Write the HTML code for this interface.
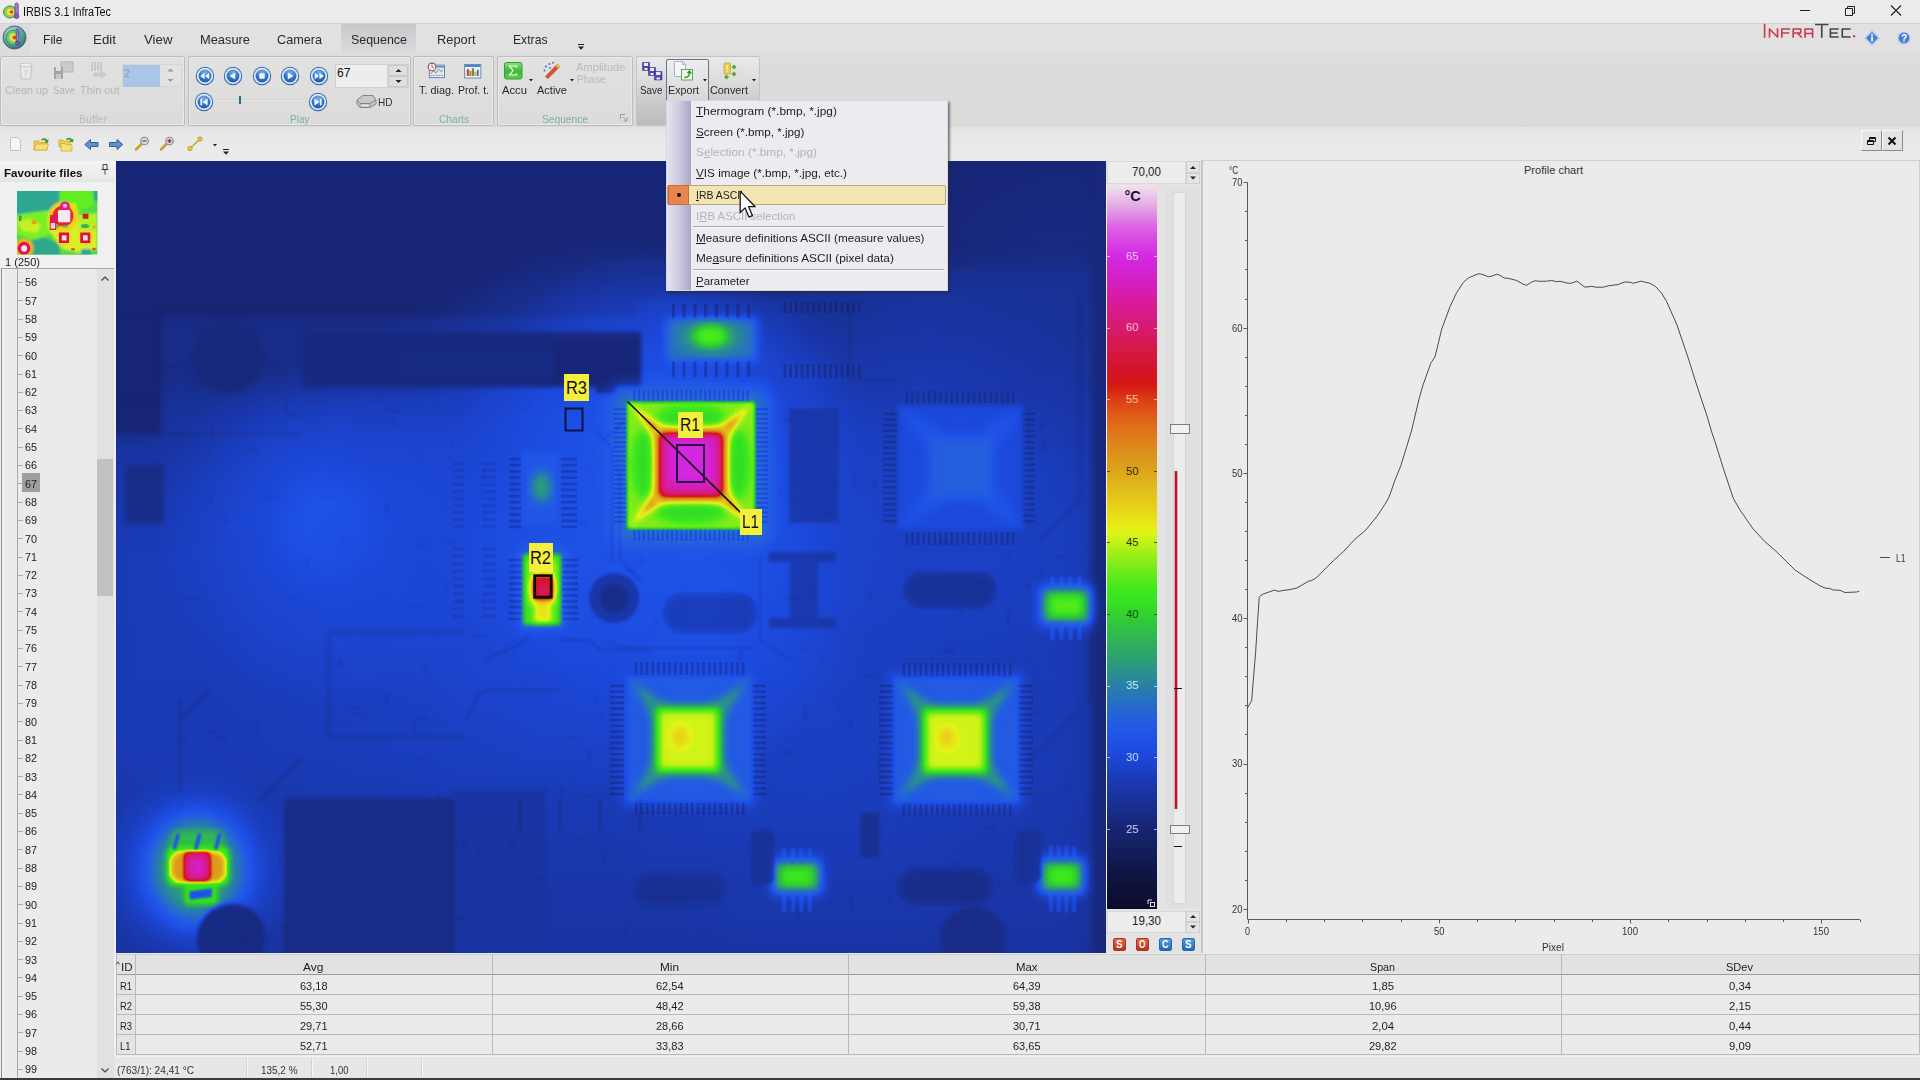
<!DOCTYPE html>
<html><head><meta charset="utf-8"><title>IRBIS 3.1 InfraTec</title>
<style>
html,body{margin:0;padding:0;}
body{width:1920px;height:1080px;overflow:hidden;background:#e6e6e6;font-family:"Liberation Sans", sans-serif;position:relative;}
.t{position:absolute;white-space:nowrap;}
.b{position:absolute;box-sizing:border-box;}
svg{position:absolute;overflow:visible;}
</style></head><body>
<div class="b" style="left:0px;top:0px;width:1920px;height:23px;background:#ececec;"></div>
<svg style="left:3px;top:2px" width="18" height="18" viewBox="0 0 18 18">
<ellipse cx="7" cy="10" rx="6.5" ry="6" fill="#8fd05a"/><ellipse cx="7" cy="10" rx="6.5" ry="6" fill="none" stroke="#3f8d4a" stroke-width="1"/>
<ellipse cx="7.5" cy="10" rx="3.6" ry="3.2" fill="#f2e23a"/><circle cx="8.5" cy="10" r="1.8" fill="#e2452a"/>
<rect x="12" y="1" width="3.2" height="12" rx="1.6" fill="#a07ad0" stroke="#5a3c8a" stroke-width=".8"/><circle cx="13.6" cy="14.2" r="2.4" fill="#8a5cc0" stroke="#5a3c8a" stroke-width=".8"/>
</svg>
<div class="t" style="left:23px;top:4.9px;font-size:12px;line-height:14.4px;color:#111;transform:scaleX(0.904);transform-origin:0 50%;">IRBIS 3.1 InfraTec</div>
<svg style="left:1790px;top:0" width="130" height="23" viewBox="0 0 130 23">
<path d="M10 10.5H20" stroke="#222" stroke-width="1" fill="none"/>
<path d="M55.5 8.5h7v7h-7zM57.5 8.5v-2h7v7h-2" stroke="#222" stroke-width="1" fill="none"/>
<path d="M101 5.5l10 10M111 5.5l-10 10" stroke="#222" stroke-width="1.1" fill="none"/>
</svg>
<div class="b" style="left:0px;top:23px;width:1920px;height:30px;background:#e1e1e1;border-top:1px solid #d4d4d4;"></div>
<div class="b" style="left:0px;top:24px;width:30px;height:29px;background:#dcdcdc;"></div>
<svg style="left:2px;top:25px" width="25" height="25" viewBox="0 0 25 25">
<defs><radialGradient id="lg1" cx=".4" cy=".35" r=".7"><stop offset="0" stop-color="#e8f6f2"/><stop offset=".6" stop-color="#5ea7a0"/><stop offset="1" stop-color="#2d5f78"/></radialGradient></defs>
<circle cx="12.5" cy="12.5" r="11.5" fill="url(#lg1)" stroke="#4a6c88" stroke-width="1"/>
<circle cx="11.5" cy="12.5" r="7.5" fill="#6fc86a"/><circle cx="11.5" cy="12.5" r="7.5" fill="none" stroke="#2f8f6f" stroke-width="1"/>
<circle cx="11.5" cy="12.5" r="4.2" fill="#e8e24a"/><circle cx="12.5" cy="12.5" r="2.1" fill="#e2452a"/>
<rect x="14.2" y="4" width="2.6" height="13" rx="1.3" fill="#9a7ad0" stroke="#4a3c8a" stroke-width=".7"/><circle cx="15.5" cy="18" r="2" fill="#7a5cc0" stroke="#4a3c8a" stroke-width=".7"/>
</svg>
<div class="b" style="left:341px;top:24px;width:75px;height:29px;background:linear-gradient(#c9c9cd,#d2d2d5 55%,#dcdcdd);"></div>
<div class="t" style="left:43px;top:32.4px;font-size:12.8px;line-height:15.4px;color:#2a2a2a;transform:scaleX(0.946);transform-origin:0 50%;">File</div>
<div class="t" style="left:93px;top:32.4px;font-size:12.8px;line-height:15.4px;color:#2a2a2a;transform:scaleX(1.043);transform-origin:0 50%;">Edit</div>
<div class="t" style="left:144px;top:32.4px;font-size:12.8px;line-height:15.4px;color:#2a2a2a;transform:scaleX(1.036);transform-origin:0 50%;">View</div>
<div class="t" style="left:200px;top:32.4px;font-size:12.8px;line-height:15.4px;color:#2a2a2a;transform:scaleX(1.004);transform-origin:0 50%;">Measure</div>
<div class="t" style="left:277px;top:32.4px;font-size:12.8px;line-height:15.4px;color:#2a2a2a;transform:scaleX(0.989);transform-origin:0 50%;">Camera</div>
<div class="t" style="left:350.5px;top:32.4px;font-size:12.8px;line-height:15.4px;color:#2a2a2a;transform:scaleX(0.971);transform-origin:0 50%;">Sequence</div>
<div class="t" style="left:437px;top:32.4px;font-size:12.8px;line-height:15.4px;color:#2a2a2a;transform:scaleX(1.002);transform-origin:0 50%;">Report</div>
<div class="t" style="left:512.5px;top:32.4px;font-size:12.8px;line-height:15.4px;color:#2a2a2a;transform:scaleX(0.951);transform-origin:0 50%;">Extras</div>
<svg style="left:577px;top:43px" width="8" height="8" viewBox="0 0 8 8"><path d="M1 1.5h6" stroke="#222" stroke-width="1"/><path d="M1 3.5h6l-3 3.2z" fill="#222"/></svg>
<svg style="left:1763px;top:23px" width="103.500" height="17" viewBox="0 0 96 17" preserveAspectRatio="none">
<g fill="none" stroke="#c83a52" stroke-width="1.5" stroke-linejoin="round" stroke-linecap="square">
<path d="M1.5 1.5V14"/><path d="M6 14V6L13.5 14V6"/><path d="M17.5 14V6H24.5M17.5 10H23.5"/><path d="M28 14V6H35V10H28M32 10L35.5 14"/><path d="M39 14V6H46V14M39 10.5H46"/>
</g>
<g fill="none" stroke="#444" stroke-width="1.5" stroke-linejoin="round" stroke-linecap="square">
<path d="M49 1.5H60M54.5 1.5V14"/><path d="M69.500 6H62.500V14H69.500M62.500 10H68.500"/><path d="M80.500 6H73.500V14H80.500"/>
</g><rect x="83.500" y="12.200" width="2" height="2" fill="#c83a52"/>
</svg>
<svg style="left:1864px;top:30px" width="16" height="16" viewBox="0 0 16 16"><path d="M8 1L15 8L8 15L1 8z" fill="#4a7fd6" stroke="#b7cdf0" stroke-width="1.4"/><rect x="7.200" y="6.500" width="1.700" height="5" fill="#fff"/><circle cx="8" cy="4.800" r="1" fill="#fff"/></svg>
<svg style="left:1897px;top:31px" width="14" height="14" viewBox="0 0 14 14"><circle cx="7" cy="7" r="6" fill="#4a7fd6" stroke="#b7cdf0" stroke-width="1.200"/><text x="7" y="10.600" font-size="10" font-weight="bold" text-anchor="middle" fill="#fff" font-family='"Liberation Sans",sans-serif'>?</text></svg>
<div class="b" style="left:0px;top:53px;width:1920px;height:74px;background:linear-gradient(#dddddc,#dddcda 30%,#dbdad8);"></div>
<div class="b" style="left:0px;top:56px;width:185px;height:70px;border:1px solid #bdbdbd;border-radius:2px;background:linear-gradient(#e1e1e0,#dcdbda);box-shadow:inset 0 0 0 1px #e9e9e8;"></div>
<div class="b" style="left:188px;top:56px;width:223px;height:70px;border:1px solid #bdbdbd;border-radius:2px;background:linear-gradient(#e1e1e0,#dcdbda);box-shadow:inset 0 0 0 1px #e9e9e8;"></div>
<div class="b" style="left:413px;top:56px;width:81px;height:70px;border:1px solid #bdbdbd;border-radius:2px;background:linear-gradient(#e1e1e0,#dcdbda);box-shadow:inset 0 0 0 1px #e9e9e8;"></div>
<div class="b" style="left:497px;top:56px;width:136px;height:70px;border:1px solid #bdbdbd;border-radius:2px;background:linear-gradient(#e1e1e0,#dcdbda);box-shadow:inset 0 0 0 1px #e9e9e8;"></div>
<div class="b" style="left:636px;top:56px;width:124px;height:70px;border:1px solid #c4c4c4;border-radius:2px;background:linear-gradient(#e9e9e9,#dcdcdc 35%,#c3c3c4 80%,#bdbdbe);"></div>
<div class="t" style="left:78.5px;top:113.1px;font-size:10.8px;line-height:13.0px;color:#b9bcbb;transform:scaleX(0.978);transform-origin:0 50%;">Buffer</div>
<div class="t" style="left:290.25px;top:113.1px;font-size:10.8px;line-height:13.0px;color:#79b3a6;transform:scaleX(0.928);transform-origin:0 50%;">Play</div>
<div class="t" style="left:439.0px;top:113.1px;font-size:10.8px;line-height:13.0px;color:#79b3a6;transform:scaleX(0.943);transform-origin:0 50%;">Charts</div>
<div class="t" style="left:542.0px;top:113.1px;font-size:10.8px;line-height:13.0px;color:#79b3a6;transform:scaleX(0.946);transform-origin:0 50%;">Sequence</div>
<svg style="left:620px;top:114px" width="8" height="8" viewBox="0 0 8 8"><path d="M.5 5V.5H5" stroke="#9a9a9a" fill="none"/><path d="M3 3L7 7M7 3.500V7H3.500" stroke="#9a9a9a" fill="none"/></svg>
<svg style="left:16px;top:61px" width="20" height="20" viewBox="0 0 20 20" opacity=".55"><path d="M4 4h12l-1.500 14h-9z" fill="#f4f4f4" stroke="#aaa"/><ellipse cx="10" cy="4" rx="6" ry="2" fill="#fafafa" stroke="#aaa"/><path d="M8 9l2 2 2-2M10 11v4" stroke="#bbb" fill="none"/></svg>
<svg style="left:53px;top:61px" width="22" height="20" viewBox="0 0 22 20" opacity=".7"><rect x="8" y="1" width="12" height="10" fill="#c4c4c4" stroke="#a0a0a0"/><path d="M1 6h9v12H1z" fill="#8a8a8a"/><rect x="3" y="6" width="5" height="4" fill="#dcdcdc"/><rect x="3" y="13" width="5" height="5" fill="#bdbdbd"/></svg>
<svg style="left:89px;top:60px" width="20" height="20" viewBox="0 0 20 20" opacity=".6"><path d="M3 2v9M6 2v9M9 2v9M12 2v9" stroke="#aaa" stroke-width="1.5"/><path d="M5 13h7v-2l5 3.500-5 3.500v-2H5z" fill="#c2c2c2" stroke="#aaa" stroke-width=".7"/></svg>
<div class="t" style="left:5px;top:84.1px;font-size:10.8px;line-height:13.0px;color:#b6b6b6;transform:scaleX(0.995);transform-origin:0 50%;">Clean up</div>
<div class="t" style="left:52.5px;top:84.1px;font-size:10.8px;line-height:13.0px;color:#b6b6b6;transform:scaleX(0.894);transform-origin:0 50%;">Save</div>
<div class="t" style="left:80px;top:84.1px;font-size:10.8px;line-height:13.0px;color:#b6b6b6;transform:scaleX(1.012);transform-origin:0 50%;">Thin out</div>
<div class="b" style="left:122px;top:64px;width:60px;height:23px;background:#e2e2e2;border:1px solid #d6d6d6;"></div>
<div class="b" style="left:122.5px;top:65px;width:37.5px;height:22px;background:#a9c6e8;"></div>
<div class="t" style="left:124px;top:67.1px;font-size:10.8px;line-height:13.0px;color:#8aa0bc;">2</div>
<svg style="left:166px;top:67px" width="9" height="17" viewBox="0 0 9 17"><path d="M1.500 4.500L4.500 1.500L7.500 4.500z" fill="#9a9a9a"/><path d="M1.500 12L4.500 15L7.500 12z" fill="#9a9a9a"/></svg>
<svg width="0" height="0" style="left:0;top:0"><defs><radialGradient id="pb" cx=".5" cy=".25" r=".9"><stop offset="0" stop-color="#7fb2e6"/><stop offset=".55" stop-color="#2f70c2"/><stop offset="1" stop-color="#1d4f96"/></radialGradient></defs></svg>
<svg style="left:195px;top:65.5px" width="20" height="20" viewBox="-10 -10 20 20"><circle r="9.2" fill="#2d66b5"/><circle r="8.200" fill="#dbe9f8"/><circle r="6.400" fill="url(#pb)"/><path d="M-0.500 -3.200V3.200L-4.800 0zM4.300 -3.200V3.200L0 0z" fill="#eef5fc"/></svg>
<svg style="left:223px;top:65.5px" width="20" height="20" viewBox="-10 -10 20 20"><circle r="9.2" fill="#2d66b5"/><circle r="8.200" fill="#dbe9f8"/><circle r="6.400" fill="url(#pb)"/><path d="M2.200 -3.600V3.600L-3.400 0z" fill="#eef5fc"/></svg>
<svg style="left:252px;top:65.5px" width="20" height="20" viewBox="-10 -10 20 20"><circle r="9.2" fill="#2d66b5"/><circle r="8.200" fill="#dbe9f8"/><circle r="6.400" fill="url(#pb)"/><rect x="-2.700" y="-2.700" width="5.400" height="5.400" rx=".8" fill="#eef5fc"/></svg>
<svg style="left:280px;top:65.5px" width="20" height="20" viewBox="-10 -10 20 20"><circle r="9.2" fill="#2d66b5"/><circle r="8.200" fill="#dbe9f8"/><circle r="6.400" fill="url(#pb)"/><path d="M-2.200 -3.600V3.600L3.400 0z" fill="#eef5fc"/></svg>
<svg style="left:309px;top:65.5px" width="20" height="20" viewBox="-10 -10 20 20"><circle r="9.2" fill="#2d66b5"/><circle r="8.200" fill="#dbe9f8"/><circle r="6.400" fill="url(#pb)"/><path d="M0.500 -3.200V3.200L4.800 0zM-4.300 -3.200V3.200L0 0z" fill="#eef5fc"/></svg>
<svg style="left:194px;top:92px" width="20" height="20" viewBox="-10 -10 20 20"><circle r="9.2" fill="#2d66b5"/><circle r="8.200" fill="#dbe9f8"/><circle r="6.400" fill="url(#pb)"/><path d="M3.600 -3.400V3.400L-1.500 0z" fill="#eef5fc"/><rect x="-3.600" y="-3.400" width="1.700" height="6.800" fill="#eef5fc"/></svg>
<svg style="left:307.5px;top:92px" width="20" height="20" viewBox="-10 -10 20 20"><circle r="9.2" fill="#2d66b5"/><circle r="8.200" fill="#dbe9f8"/><circle r="6.400" fill="url(#pb)"/><path d="M-3.600 -3.400V3.400L1.500 0z" fill="#eef5fc"/><rect x="1.900" y="-3.400" width="1.700" height="6.800" fill="#eef5fc"/></svg>
<div class="b" style="left:219px;top:99px;width:84px;height:2px;background:#d2d2d2;border-bottom:1px solid #e8e8e8;"></div>
<div class="b" style="left:239px;top:96px;width:2px;height:8px;background:#2a6a9a;"></div>
<div class="b" style="left:335px;top:64px;width:74px;height:24px;background:#d9d9d9;border:1px solid #d0d0d0;"></div>
<div class="b" style="left:336px;top:65px;width:51px;height:22px;background:#ededed;"></div>
<div class="t" style="left:337px;top:65.9px;font-size:12px;line-height:14.4px;color:#111;">67</div>
<div class="b" style="left:388px;top:65px;width:20px;height:11px;background:#dedede;border:1px solid #c9c9c9;"></div>
<div class="b" style="left:388px;top:76px;width:20px;height:11px;background:#dedede;border:1px solid #c9c9c9;"></div>
<svg style="left:394px;top:66px" width="9" height="20" viewBox="0 0 9 20"><path d="M1.500 6L4.500 3L7.500 6z" fill="#222"/><path d="M1.500 14L4.500 17L7.500 14z" fill="#222"/></svg>
<svg style="left:356px;top:94px" width="21" height="15" viewBox="0 0 21 15"><path d="M1 6L7 1.500H17L20 6V10L14 13.500H4L1 10z" fill="#c9c9c9" stroke="#7a7a7a" stroke-width=".9"/><path d="M1 6L4 9.500H14L20 6" fill="none" stroke="#7a7a7a" stroke-width=".9"/><path d="M4 9.500V13.500M14 9.500V13.500" stroke="#8a8a8a" stroke-width=".7"/><path d="M6 11.500h6" stroke="#eee"/></svg>
<div class="t" style="left:378px;top:96.1px;font-size:10.8px;line-height:13.0px;color:#333;transform:scaleX(0.93);transform-origin:0 50%;">HD</div>
<svg style="left:427px;top:62px" width="19" height="17" viewBox="0 0 21 19"><rect x="2.500" y="3.500" width="17" height="14" fill="#dfeaf6" stroke="#5a7fae"/><rect x="3" y="4" width="16" height="2.500" fill="#7a9cc8"/><path d="M4 13l3-3 3 2 3-4 3 3 2-2" stroke="#4b9a5a" fill="none"/><path d="M4 15h14" stroke="#888" stroke-dasharray="2 1"/><circle cx="5.500" cy="5.500" r="4.300" fill="#f6eef0" stroke="#b8455a" stroke-width="1.300"/><path d="M5.500 5.500V3M5.500 5.500L7.500 6.500" stroke="#7a2a3a" stroke-width=".8"/></svg>
<svg style="left:464px;top:63.500px" width="17.500" height="14.500" viewBox="0 0 20 17"><rect x=".5" y=".5" width="19" height="16" fill="#e9f0f8" stroke="#5a7fae"/><rect x="1" y="1" width="18" height="2.500" fill="#4f86c6"/><rect x="3" y="6" width="2.500" height="8" fill="#c8492f"/><rect x="6" y="8" width="2.500" height="6" fill="#d9792f"/><rect x="9" y="5" width="2.500" height="9" fill="#4a9a4a"/><rect x="12" y="9" width="2.500" height="5" fill="#d9b02f"/><rect x="15" y="7" width="2" height="7" fill="#3b70b8"/></svg>
<div class="t" style="left:418.5px;top:84.1px;font-size:10.8px;line-height:13.0px;color:#2a2a2a;transform:scaleX(1.005);transform-origin:0 50%;">T. diag.</div>
<div class="t" style="left:457.5px;top:84.1px;font-size:10.8px;line-height:13.0px;color:#2a2a2a;transform:scaleX(0.975);transform-origin:0 50%;">Prof. t.</div>
<svg style="left:504px;top:62px" width="19" height="18" viewBox="0 0 19 18"><defs><linearGradient id="ga" x1="0" y1="0" x2="0" y2="1"><stop offset="0" stop-color="#8fe07a"/><stop offset=".5" stop-color="#3fb93a"/><stop offset="1" stop-color="#56cf4a"/></linearGradient></defs><rect x=".5" y=".5" width="17.500" height="16.500" rx="2" fill="url(#ga)" stroke="#3a9a36"/><path d="M12.500 5.500V4H5.500L9 8.500L5.500 13H12.500V11.500" fill="none" stroke="#f4fff0" stroke-width="1.200"/></svg>
<svg style="left:542px;top:61px" width="20" height="20" viewBox="0 0 20 20"><path d="M3.500 17.500L14 6.500L16.500 9L6 19.500z" fill="#e0502f" stroke="#a8341f" stroke-width=".6" transform="translate(0,-2)"/><path d="M13.500 5L15.500 3L18 5.500L16 7.500z" fill="#f0c040" stroke="#a8801f" stroke-width=".5"/><g fill="#3b7fd0"><circle cx="4" cy="5.500" r="1.100"/><circle cx="7.500" cy="3" r="1.100"/><circle cx="11" cy="1.800" r="1"/><circle cx="2.500" cy="9.500" r="1"/><circle cx="8" cy="7" r=".9"/></g></svg>
<div class="t" style="left:501.5px;top:84.1px;font-size:10.8px;line-height:13.0px;color:#2a2a2a;transform:scaleX(1.041);transform-origin:0 50%;">Accu</div>
<div class="t" style="left:536.5px;top:84.1px;font-size:10.8px;line-height:13.0px;color:#2a2a2a;transform:scaleX(1.02);transform-origin:0 50%;">Active</div>
<div class="t" style="left:576px;top:60.6px;font-size:10.8px;line-height:13.0px;color:#b9b9b9;transform:scaleX(1.031);transform-origin:0 50%;">Amplitude</div>
<div class="t" style="left:576.5px;top:73.1px;font-size:10.8px;line-height:13.0px;color:#b9b9b9;transform:scaleX(0.931);transform-origin:0 50%;">Phase</div>
<svg style="left:529px;top:79px" width="4" height="2.500" viewBox="0 0 4 2.500"><path d="M0 0H4L2 2.500z" fill="#222"/></svg>
<svg style="left:569.5px;top:79px" width="4" height="2.500" viewBox="0 0 4 2.500"><path d="M0 0H4L2 2.500z" fill="#222"/></svg>
<svg style="left:642px;top:62px" width="21" height="19" viewBox="0 0 21 19"><g fill="#4a4ab0" stroke="#2a2a7a" stroke-width=".5"><path d="M.5 .5h7v8h-7z"/><path d="M6.500 5.500h7v8h-7z"/><path d="M12.500 9.500h7.500v8.500h-7.500z"/></g><g fill="#e9e9f6"><rect x="2" y="1" width="4" height="3"/><rect x="8" y="6" width="4" height="3"/><rect x="14" y="10" width="4.500" height="3"/><rect x="2.500" y="6" width="3" height="2"/><rect x="8.500" y="11" width="3" height="2"/><rect x="14.500" y="15.500" width="3.500" height="2"/></g></svg>
<div class="b" style="left:665.5px;top:59px;width:43px;height:44px;border:1px solid #6f7186;border-radius:2px;background:linear-gradient(#ededee,#e3e3e6 50%,#d6d6da);"></div>
<svg style="left:674px;top:61px" width="20" height="21" viewBox="0 0 20 21"><path d="M.5 .5h8l3 3v12H.5z" fill="#f4f6fa" stroke="#9aa6bb" stroke-width=".8"/><path d="M8.500 .5v3h3" fill="none" stroke="#9aa6bb" stroke-width=".8"/><rect x="7.500" y="8.500" width="11" height="10.500" fill="#eef6ea" stroke="#5a9a4a" stroke-width=".9"/><path d="M10.500 16.500c3 0 5-2 5-5m-2 .8l2-2.300 1.800 2.500" fill="none" stroke="#2f8a2a" stroke-width="1.300"/></svg>
<svg style="left:722px;top:62px" width="17" height="19" viewBox="0 0 17 19"><rect x="2" y="1" width="6.500" height="11" rx="1" fill="#e9cf4a" stroke="#b59a2a" stroke-width=".6"/><path d="M5.200 3v4.500M5.200 9v1.200" stroke="#fff7c0" stroke-width="1.200"/><g fill="#5aa832"><path d="M9.500 5l2.500-2.500L14.500 5 12 7.500z"/><path d="M9.500 12l2.500-2.500 2.500 2.500-2.500 2.500z"/><path d="M2 15l2.500-2.500L7 15l-2.500 2.500z"/></g></svg>
<div class="t" style="left:640.25px;top:84.1px;font-size:10.8px;line-height:13.0px;color:#2a2a2a;transform:scaleX(0.914);transform-origin:0 50%;">Save</div>
<div class="t" style="left:668.0px;top:84.1px;font-size:10.8px;line-height:13.0px;color:#2a2a2a;transform:scaleX(0.993);transform-origin:0 50%;">Export</div>
<div class="t" style="left:710.0px;top:84.1px;font-size:10.8px;line-height:13.0px;color:#2a2a2a;transform:scaleX(1.005);transform-origin:0 50%;">Convert</div>
<svg style="left:702.5px;top:79px" width="4" height="2.500" viewBox="0 0 4 2.500"><path d="M0 0H4L2 2.500z" fill="#222"/></svg>
<svg style="left:751.5px;top:79px" width="4" height="2.500" viewBox="0 0 4 2.500"><path d="M0 0H4L2 2.500z" fill="#222"/></svg>
<div class="b" style="left:0px;top:127px;width:1920px;height:34px;background:linear-gradient(#e3e3e3,#e9e9e9 40%,#ececec);"></div>
<svg style="left:8px;top:136px" width="230" height="22" viewBox="0 0 230 22">
<path d="M2.500 1.500h7l3 3v10h-10z" fill="#f3f5fb" stroke="#b7bdd0" stroke-width=".9"/>
<g transform="translate(25,0)"><path d="M1 5h5l1.500 1.500H14V14H1z" fill="#f0cf4a" stroke="#c9a52a" stroke-width=".7"/><path d="M3 8h12.500L13.500 14H1z" fill="#f7e07a" stroke="#c9a52a" stroke-width=".7"/><path d="M8 3.500c2.500-2 5-1.500 6 .5l1.500-1-.5 4-3.800-1 1.400-.9c-.8-1.200-2.400-1.300-3.800-.4z" fill="#3f9a2f"/></g>
<g transform="translate(50,0)"><path d="M1 4h4l1.200 1.200H12V11H1z" fill="#f0cf4a" stroke="#c9a52a" stroke-width=".7"/><path d="M3 7.500h4l1.200 1.200H14V15H3z" fill="#f7e07a" stroke="#c9a52a" stroke-width=".7"/><path d="M8 3c2.500-2 5-1.500 6 .5l1.500-1-.5 4-3.800-1 1.400-.9c-.8-1.200-2.400-1.300-3.800-.4z" fill="#3f9a2f"/></g>
<g transform="translate(76,2)"><path d="M.8 6.500L6.500 1.500V4.500H14V8.500H6.500V11.500z" fill="#5b92cf" stroke="#2f5f96" stroke-width="1"/></g>
<g transform="translate(100.500,2)"><path d="M14.200 6.500L8.500 1.500V4.500H1V8.500H8.500V11.500z" fill="#5b92cf" stroke="#2f5f96" stroke-width="1"/></g>
<g transform="translate(126,0)"><path d="M2 13.500L7.500 8" stroke="#c9a030" stroke-width="2.600" stroke-linecap="round"/><circle cx="10.500" cy="5" r="3.800" fill="#d3d9e6" stroke="#8a8a96" stroke-width="1.100"/><path d="M8.500 5h4" stroke="#555" stroke-width="1.200"/></g>
<g transform="translate(151,0)"><path d="M2 13.500L7.500 8" stroke="#c9a030" stroke-width="2.600" stroke-linecap="round"/><circle cx="10.500" cy="5" r="3.800" fill="#d9d3e2" stroke="#8a8a96" stroke-width="1.100"/><path d="M8.500 5h4M10.500 3v4" stroke="#b0203a" stroke-width="1.300"/></g>
<g transform="translate(179,0)"><path d="M3 12.500L13 3" stroke="#c9a62a" stroke-width="1.400"/><circle cx="3" cy="12.500" r="2.200" fill="#e6c63a" stroke="#a88a1a" stroke-width=".6"/><circle cx="13" cy="3" r="2.200" fill="#e6c63a" stroke="#a88a1a" stroke-width=".6"/></g>
</svg>
<svg style="left:212.5px;top:143.5px" width="4" height="2.500" viewBox="0 0 4 2.500"><path d="M0 0H4L2 2.500z" fill="#222"/></svg>
<svg style="left:222px;top:148px" width="8" height="8" viewBox="0 0 8 8"><path d="M1 1.500h6" stroke="#222" stroke-width="1"/><path d="M1 3.500h6l-3 3.200z" fill="#222"/></svg>
<div class="b" style="left:1861px;top:130px;width:21px;height:21px;background:#e4e4e4;border:1px solid #f8f8f8;border-right-color:#8a8a8a;border-bottom-color:#8a8a8a;"></div>
<div class="b" style="left:1882px;top:130px;width:21px;height:21px;background:#e4e4e4;border:1px solid #f8f8f8;border-right-color:#8a8a8a;border-bottom-color:#8a8a8a;"></div>
<svg style="left:1866px;top:136px" width="11" height="10" viewBox="0 0 11 10"><path d="M3.500 1.500h6v4h-6zM3.500 2.500h6" stroke="#111" fill="none"/><path d="M1.500 4.500h6v4h-6z" fill="#e4e4e4" stroke="#111"/><path d="M1.500 5.500h6" stroke="#111"/></svg>
<svg style="left:1887px;top:136px" width="10" height="10" viewBox="0 0 10 10"><path d="M1.500 1.500l7 7M8.500 1.500l-7 7" stroke="#111" stroke-width="2"/></svg>
<div class="b" style="left:0px;top:161px;width:116px;height:919px;background:#f0f0f0;"></div>
<div class="b" style="left:0px;top:161px;width:114px;height:21px;background:linear-gradient(#f3f3f3,#ececec 70%,#e4e4e4);"></div>
<div class="t" style="left:3.5px;top:166.5px;font-size:11px;line-height:13.2px;color:#111;font-weight:bold;transform:scaleX(1.053);transform-origin:0 50%;">Favourite files</div>
<svg style="left:100px;top:163px" width="10" height="13" viewBox="0 0 10 13"><path d="M3 1.500h4v5h-4zM1.500 6.500h7M5 6.500v5" stroke="#333" fill="none" stroke-width=".9"/></svg>
<svg style="left:17.300px;top:190.900px" width="80.300" height="63.500" viewBox="0 0 80.300 63.500">
<defs><filter id="tb" x="-10%" y="-10%" width="120%" height="120%"><feGaussianBlur stdDeviation="1.300"/></filter>
<filter id="tb2" x="-10%" y="-10%" width="120%" height="120%"><feGaussianBlur stdDeviation=".55"/></filter>
<clipPath id="tc"><rect width="80.300" height="63.500"/></clipPath></defs>
<g clip-path="url(#tc)"><rect width="81" height="65" fill="#52d848"/>
<g filter="url(#tb)">
<path d="M-3 -3H43L41 19L20 21L-3 24z" fill="#2fa892"/>
<path d="M76 -3H84V12L77 9z" fill="#2fa892"/>
<path d="M43 -3H76V14L60 22L43 18z" fill="#62ee22"/>
<path d="M-3 24L20 21L44 18L38 40L20 50L-3 42z" fill="#7af024"/>
<path d="M0 30L14 28L24 34L20 42L6 40z" fill="#c6f02a"/>
<path d="M13 50L26 46L40 52L46 66H12z" fill="#2fa88c"/>
<path d="M40 50L56 56L66 60L64 66H44z" fill="#5ad84a"/>
<path d="M36 16L58 12L62 24L80 24V58L64 62L46 58L36 46L30 34z" fill="#d8f028"/>
<path d="M60 24L80 22V40L62 40z" fill="#b4f028"/>
<path d="M64 58H74V66H64z" fill="#2fa88c"/>
<ellipse cx="46" cy="26" rx="15" ry="15" fill="#f2d020"/>
<ellipse cx="47" cy="47" rx="8" ry="8" fill="#f0d828"/><ellipse cx="68.500" cy="47" rx="8" ry="8" fill="#f0d828"/>
<ellipse cx="7" cy="57" rx="9.500" ry="9.500" fill="#f0b020"/>
</g>
<g filter="url(#tb2)">
<ellipse cx="46" cy="25" rx="10.500" ry="10.500" fill="#e42a2a"/>
<ellipse cx="48" cy="15.500" rx="5" ry="5" fill="#e0207a"/><ellipse cx="48" cy="14.800" rx="2.200" ry="2" fill="#f4a8e0"/>
<path d="M33 24H42V33H33z" fill="#e01a58"/>
<rect x="32.700" y="31" width="6.600" height="8" fill="#d8202a"/>
<rect x="41" y="19" width="12.300" height="12.300" rx="1.500" fill="#f8e8f6"/>
<rect x="33.700" y="32" width="4.400" height="5.600" fill="#fad4ee"/>
<rect x="42" y="41.500" width="10" height="10.500" fill="#d8142e"/><rect x="44.800" y="44.300" width="4.700" height="5.200" fill="#fbd6f0"/>
<rect x="63.300" y="41.500" width="10" height="10.500" fill="#d8142e"/><rect x="66" y="44.300" width="4.700" height="5.200" fill="#fbd6f0"/>
<rect x="65.800" y="22.800" width="5.600" height="5" fill="#cf1a14"/>
<ellipse cx="17" cy="31" rx="2.600" ry="2.200" fill="#e0a818"/>
<ellipse cx="68" cy="35" rx="4.200" ry="2" fill="#3cb45a"/>
<rect x="2" y="24.500" width="2.400" height="5.500" fill="#3c9a50"/>
<ellipse cx="7" cy="57.300" rx="6.300" ry="6.600" fill="#de1450"/><ellipse cx="7.200" cy="57.500" rx="3" ry="3.300" fill="#fbe0f4"/>
<ellipse cx="56" cy="58.300" rx="1.800" ry="1.300" fill="#e0502a"/><ellipse cx="77" cy="58" rx="1.800" ry="1.300" fill="#e0502a"/><ellipse cx="77" cy="36" rx="1.500" ry="1.600" fill="#ee9a4a"/>
<rect x="39" y="34.500" width="3" height="2" fill="#4ab850"/><rect x="45" y="34.500" width="6" height="2" fill="#58c84a"/>
</g></g></svg>
<div class="t" style="left:5px;top:255.8px;font-size:10.5px;line-height:12.6px;color:#222;transform:scaleX(1.052);transform-origin:0 50%;">1 (250)</div>
<div class="b" style="left:1px;top:268px;width:113px;height:812px;background:#ebebeb;border-left:1px solid #8c8c8c;border-top:1px solid #a8a8a8;"></div>
<div class="b" style="left:3px;top:269px;width:1px;height:811px;background:#f6f6f6;"></div>
<div class="b" style="left:17px;top:269px;width:1px;height:811px;background:#a9a9a9;"></div>
<div class="b" style="left:97px;top:269px;width:17px;height:811px;background:#e1e1e1;"></div>
<div class="b" style="left:97px;top:459px;width:16px;height:137px;background:#c1c1c1;"></div>
<svg style="left:100px;top:275px" width="10" height="7" viewBox="0 0 10 7"><path d="M1.500 5.500L5 2L8.500 5.500" stroke="#444" stroke-width="1.200" fill="none"/></svg>
<svg style="left:100px;top:1067px" width="10" height="7" viewBox="0 0 10 7"><path d="M1.500 1.500L5 5L8.500 1.500" stroke="#444" stroke-width="1.200" fill="none"/></svg>
<div class="b" style="left:22px;top:473px;width:18px;height:18.5px;background:#9f9f9f;"></div>
<div class="b" style="left:18px;top:282px;width:5px;height:1px;background:#a9a9a9;"></div>
<div class="t" style="left:24.5px;top:276.3px;font-size:10.5px;line-height:12.6px;color:#222;transform:scaleX(1.028);transform-origin:0 50%;">56</div>
<div class="b" style="left:18px;top:300px;width:5px;height:1px;background:#a9a9a9;"></div>
<div class="t" style="left:24.5px;top:294.6px;font-size:10.5px;line-height:12.6px;color:#222;transform:scaleX(1.028);transform-origin:0 50%;">57</div>
<div class="b" style="left:18px;top:319px;width:5px;height:1px;background:#a9a9a9;"></div>
<div class="t" style="left:24.5px;top:312.9px;font-size:10.5px;line-height:12.6px;color:#222;transform:scaleX(1.028);transform-origin:0 50%;">58</div>
<div class="b" style="left:18px;top:337px;width:5px;height:1px;background:#a9a9a9;"></div>
<div class="t" style="left:24.5px;top:331.2px;font-size:10.5px;line-height:12.6px;color:#222;transform:scaleX(1.028);transform-origin:0 50%;">59</div>
<div class="b" style="left:18px;top:355px;width:5px;height:1px;background:#a9a9a9;"></div>
<div class="t" style="left:24.5px;top:349.5px;font-size:10.5px;line-height:12.6px;color:#222;transform:scaleX(1.028);transform-origin:0 50%;">60</div>
<div class="b" style="left:18px;top:374px;width:5px;height:1px;background:#a9a9a9;"></div>
<div class="t" style="left:24.5px;top:367.8px;font-size:10.5px;line-height:12.6px;color:#222;transform:scaleX(1.028);transform-origin:0 50%;">61</div>
<div class="b" style="left:18px;top:392px;width:5px;height:1px;background:#a9a9a9;"></div>
<div class="t" style="left:24.5px;top:386.1px;font-size:10.5px;line-height:12.6px;color:#222;transform:scaleX(1.028);transform-origin:0 50%;">62</div>
<div class="b" style="left:18px;top:410px;width:5px;height:1px;background:#a9a9a9;"></div>
<div class="t" style="left:24.5px;top:404.4px;font-size:10.5px;line-height:12.6px;color:#222;transform:scaleX(1.028);transform-origin:0 50%;">63</div>
<div class="b" style="left:18px;top:428px;width:5px;height:1px;background:#a9a9a9;"></div>
<div class="t" style="left:24.5px;top:422.7px;font-size:10.5px;line-height:12.6px;color:#222;transform:scaleX(1.028);transform-origin:0 50%;">64</div>
<div class="b" style="left:18px;top:447px;width:5px;height:1px;background:#a9a9a9;"></div>
<div class="t" style="left:24.5px;top:441.0px;font-size:10.5px;line-height:12.6px;color:#222;transform:scaleX(1.028);transform-origin:0 50%;">65</div>
<div class="b" style="left:18px;top:465px;width:5px;height:1px;background:#a9a9a9;"></div>
<div class="t" style="left:24.5px;top:459.3px;font-size:10.5px;line-height:12.6px;color:#222;transform:scaleX(1.028);transform-origin:0 50%;">66</div>
<div class="b" style="left:18px;top:483px;width:5px;height:1px;background:#a9a9a9;"></div>
<div class="t" style="left:24.5px;top:477.6px;font-size:10.5px;line-height:12.6px;color:#222;transform:scaleX(1.028);transform-origin:0 50%;">67</div>
<div class="b" style="left:18px;top:502px;width:5px;height:1px;background:#a9a9a9;"></div>
<div class="t" style="left:24.5px;top:495.9px;font-size:10.5px;line-height:12.6px;color:#222;transform:scaleX(1.028);transform-origin:0 50%;">68</div>
<div class="b" style="left:18px;top:520px;width:5px;height:1px;background:#a9a9a9;"></div>
<div class="t" style="left:24.5px;top:514.2px;font-size:10.5px;line-height:12.6px;color:#222;transform:scaleX(1.028);transform-origin:0 50%;">69</div>
<div class="b" style="left:18px;top:538px;width:5px;height:1px;background:#a9a9a9;"></div>
<div class="t" style="left:24.5px;top:532.5px;font-size:10.5px;line-height:12.6px;color:#222;transform:scaleX(1.028);transform-origin:0 50%;">70</div>
<div class="b" style="left:18px;top:557px;width:5px;height:1px;background:#a9a9a9;"></div>
<div class="t" style="left:24.5px;top:550.8px;font-size:10.5px;line-height:12.6px;color:#222;transform:scaleX(1.028);transform-origin:0 50%;">71</div>
<div class="b" style="left:18px;top:575px;width:5px;height:1px;background:#a9a9a9;"></div>
<div class="t" style="left:24.5px;top:569.1px;font-size:10.5px;line-height:12.6px;color:#222;transform:scaleX(1.028);transform-origin:0 50%;">72</div>
<div class="b" style="left:18px;top:593px;width:5px;height:1px;background:#a9a9a9;"></div>
<div class="t" style="left:24.5px;top:587.4px;font-size:10.5px;line-height:12.6px;color:#222;transform:scaleX(1.028);transform-origin:0 50%;">73</div>
<div class="b" style="left:18px;top:611px;width:5px;height:1px;background:#a9a9a9;"></div>
<div class="t" style="left:24.5px;top:605.7px;font-size:10.5px;line-height:12.6px;color:#222;transform:scaleX(1.028);transform-origin:0 50%;">74</div>
<div class="b" style="left:18px;top:630px;width:5px;height:1px;background:#a9a9a9;"></div>
<div class="t" style="left:24.5px;top:624.0px;font-size:10.5px;line-height:12.6px;color:#222;transform:scaleX(1.028);transform-origin:0 50%;">75</div>
<div class="b" style="left:18px;top:648px;width:5px;height:1px;background:#a9a9a9;"></div>
<div class="t" style="left:24.5px;top:642.3px;font-size:10.5px;line-height:12.6px;color:#222;transform:scaleX(1.028);transform-origin:0 50%;">76</div>
<div class="b" style="left:18px;top:666px;width:5px;height:1px;background:#a9a9a9;"></div>
<div class="t" style="left:24.5px;top:660.6px;font-size:10.5px;line-height:12.6px;color:#222;transform:scaleX(1.028);transform-origin:0 50%;">77</div>
<div class="b" style="left:18px;top:685px;width:5px;height:1px;background:#a9a9a9;"></div>
<div class="t" style="left:24.5px;top:678.9px;font-size:10.5px;line-height:12.6px;color:#222;transform:scaleX(1.028);transform-origin:0 50%;">78</div>
<div class="b" style="left:18px;top:703px;width:5px;height:1px;background:#a9a9a9;"></div>
<div class="t" style="left:24.5px;top:697.2px;font-size:10.5px;line-height:12.6px;color:#222;transform:scaleX(1.028);transform-origin:0 50%;">79</div>
<div class="b" style="left:18px;top:721px;width:5px;height:1px;background:#a9a9a9;"></div>
<div class="t" style="left:24.5px;top:715.5px;font-size:10.5px;line-height:12.6px;color:#222;transform:scaleX(1.028);transform-origin:0 50%;">80</div>
<div class="b" style="left:18px;top:740px;width:5px;height:1px;background:#a9a9a9;"></div>
<div class="t" style="left:24.5px;top:733.9px;font-size:10.5px;line-height:12.6px;color:#222;transform:scaleX(1.028);transform-origin:0 50%;">81</div>
<div class="b" style="left:18px;top:758px;width:5px;height:1px;background:#a9a9a9;"></div>
<div class="t" style="left:24.5px;top:752.2px;font-size:10.5px;line-height:12.6px;color:#222;transform:scaleX(1.028);transform-origin:0 50%;">82</div>
<div class="b" style="left:18px;top:776px;width:5px;height:1px;background:#a9a9a9;"></div>
<div class="t" style="left:24.5px;top:770.5px;font-size:10.5px;line-height:12.6px;color:#222;transform:scaleX(1.028);transform-origin:0 50%;">83</div>
<div class="b" style="left:18px;top:794px;width:5px;height:1px;background:#a9a9a9;"></div>
<div class="t" style="left:24.5px;top:788.8px;font-size:10.5px;line-height:12.6px;color:#222;transform:scaleX(1.028);transform-origin:0 50%;">84</div>
<div class="b" style="left:18px;top:813px;width:5px;height:1px;background:#a9a9a9;"></div>
<div class="t" style="left:24.5px;top:807.1px;font-size:10.5px;line-height:12.6px;color:#222;transform:scaleX(1.028);transform-origin:0 50%;">85</div>
<div class="b" style="left:18px;top:831px;width:5px;height:1px;background:#a9a9a9;"></div>
<div class="t" style="left:24.5px;top:825.4px;font-size:10.5px;line-height:12.6px;color:#222;transform:scaleX(1.028);transform-origin:0 50%;">86</div>
<div class="b" style="left:18px;top:849px;width:5px;height:1px;background:#a9a9a9;"></div>
<div class="t" style="left:24.5px;top:843.7px;font-size:10.5px;line-height:12.6px;color:#222;transform:scaleX(1.028);transform-origin:0 50%;">87</div>
<div class="b" style="left:18px;top:868px;width:5px;height:1px;background:#a9a9a9;"></div>
<div class="t" style="left:24.5px;top:862.0px;font-size:10.5px;line-height:12.6px;color:#222;transform:scaleX(1.028);transform-origin:0 50%;">88</div>
<div class="b" style="left:18px;top:886px;width:5px;height:1px;background:#a9a9a9;"></div>
<div class="t" style="left:24.5px;top:880.3px;font-size:10.5px;line-height:12.6px;color:#222;transform:scaleX(1.028);transform-origin:0 50%;">89</div>
<div class="b" style="left:18px;top:904px;width:5px;height:1px;background:#a9a9a9;"></div>
<div class="t" style="left:24.5px;top:898.6px;font-size:10.5px;line-height:12.6px;color:#222;transform:scaleX(1.028);transform-origin:0 50%;">90</div>
<div class="b" style="left:18px;top:923px;width:5px;height:1px;background:#a9a9a9;"></div>
<div class="t" style="left:24.5px;top:916.9px;font-size:10.5px;line-height:12.6px;color:#222;transform:scaleX(1.028);transform-origin:0 50%;">91</div>
<div class="b" style="left:18px;top:941px;width:5px;height:1px;background:#a9a9a9;"></div>
<div class="t" style="left:24.5px;top:935.2px;font-size:10.5px;line-height:12.6px;color:#222;transform:scaleX(1.028);transform-origin:0 50%;">92</div>
<div class="b" style="left:18px;top:959px;width:5px;height:1px;background:#a9a9a9;"></div>
<div class="t" style="left:24.5px;top:953.5px;font-size:10.5px;line-height:12.6px;color:#222;transform:scaleX(1.028);transform-origin:0 50%;">93</div>
<div class="b" style="left:18px;top:977px;width:5px;height:1px;background:#a9a9a9;"></div>
<div class="t" style="left:24.5px;top:971.8px;font-size:10.5px;line-height:12.6px;color:#222;transform:scaleX(1.028);transform-origin:0 50%;">94</div>
<div class="b" style="left:18px;top:996px;width:5px;height:1px;background:#a9a9a9;"></div>
<div class="t" style="left:24.5px;top:990.1px;font-size:10.5px;line-height:12.6px;color:#222;transform:scaleX(1.028);transform-origin:0 50%;">95</div>
<div class="b" style="left:18px;top:1014px;width:5px;height:1px;background:#a9a9a9;"></div>
<div class="t" style="left:24.5px;top:1008.4px;font-size:10.5px;line-height:12.6px;color:#222;transform:scaleX(1.028);transform-origin:0 50%;">96</div>
<div class="b" style="left:18px;top:1032px;width:5px;height:1px;background:#a9a9a9;"></div>
<div class="t" style="left:24.5px;top:1026.7px;font-size:10.5px;line-height:12.6px;color:#222;transform:scaleX(1.028);transform-origin:0 50%;">97</div>
<div class="b" style="left:18px;top:1051px;width:5px;height:1px;background:#a9a9a9;"></div>
<div class="t" style="left:24.5px;top:1045.0px;font-size:10.5px;line-height:12.6px;color:#222;transform:scaleX(1.028);transform-origin:0 50%;">98</div>
<div class="b" style="left:18px;top:1069px;width:5px;height:1px;background:#a9a9a9;"></div>
<div class="t" style="left:24.5px;top:1063.3px;font-size:10.5px;line-height:12.6px;color:#222;transform:scaleX(1.028);transform-origin:0 50%;">99</div>
<svg style="left:116px;top:161px" width="990" height="792" viewBox="116 161 990 792"><defs><filter id="bl1" x="-20%" y="-20%" width="140%" height="140%" color-interpolation-filters="sRGB"><feGaussianBlur stdDeviation="1"/></filter><filter id="bl1_5" x="-20%" y="-20%" width="140%" height="140%" color-interpolation-filters="sRGB"><feGaussianBlur stdDeviation="1.5"/></filter><filter id="bl2" x="-20%" y="-20%" width="140%" height="140%" color-interpolation-filters="sRGB"><feGaussianBlur stdDeviation="2"/></filter><filter id="bl2_5" x="-20%" y="-20%" width="140%" height="140%" color-interpolation-filters="sRGB"><feGaussianBlur stdDeviation="2.5"/></filter><filter id="bl3" x="-20%" y="-20%" width="140%" height="140%" color-interpolation-filters="sRGB"><feGaussianBlur stdDeviation="3"/></filter><filter id="bl4" x="-20%" y="-20%" width="140%" height="140%" color-interpolation-filters="sRGB"><feGaussianBlur stdDeviation="4"/></filter><filter id="bl5" x="-20%" y="-20%" width="140%" height="140%" color-interpolation-filters="sRGB"><feGaussianBlur stdDeviation="5"/></filter><filter id="bl6" x="-20%" y="-20%" width="140%" height="140%" color-interpolation-filters="sRGB"><feGaussianBlur stdDeviation="6"/></filter><filter id="bl8" x="-20%" y="-20%" width="140%" height="140%" color-interpolation-filters="sRGB"><feGaussianBlur stdDeviation="8"/></filter><filter id="bl10" x="-20%" y="-20%" width="140%" height="140%" color-interpolation-filters="sRGB"><feGaussianBlur stdDeviation="10"/></filter><filter id="bl12" x="-20%" y="-20%" width="140%" height="140%" color-interpolation-filters="sRGB"><feGaussianBlur stdDeviation="12"/></filter><filter id="bl16" x="-20%" y="-20%" width="140%" height="140%" color-interpolation-filters="sRGB"><feGaussianBlur stdDeviation="16"/></filter><filter id="bl20" x="-20%" y="-20%" width="140%" height="140%" color-interpolation-filters="sRGB"><feGaussianBlur stdDeviation="20"/></filter><filter id="cmap" x="0" y="0" width="100%" height="100%" color-interpolation-filters="sRGB"><feComponentTransfer><feFuncR type="table" tableValues="0.039 0.043 0.046 0.049 0.051 0.053 0.056 0.058 0.060 0.063 0.065 0.067 0.070 0.072 0.075 0.077 0.080 0.083 0.087 0.090 0.091 0.093 0.094 0.095 0.096 0.097 0.098 0.100 0.101 0.102 0.103 0.104 0.105 0.107 0.108 0.109 0.111 0.113 0.115 0.118 0.122 0.127 0.132 0.135 0.137 0.140 0.142 0.144 0.147 0.149 0.151 0.154 0.156 0.158 0.161 0.163 0.165 0.168 0.170 0.173 0.175 0.177 0.180 0.182 0.184 0.187 0.190 0.195 0.199 0.204 0.206 0.209 0.211 0.226 0.247 0.268 0.298 0.345 0.392 0.439 0.486 0.533 0.580 0.631 0.682 0.734 0.785 0.836 0.886 0.895 0.904 0.909 0.906 0.902 0.899 0.896 0.893 0.888 0.883 0.878 0.874 0.869 0.864 0.863 0.863 0.863 0.863 0.863 0.865 0.868 0.871 0.874 0.877 0.878 0.878 0.878 0.877 0.872 0.867 0.863 0.853 0.844 0.835 0.831 0.831 0.831 0.832 0.833 0.835 0.837 0.838 0.839 0.839 0.839 0.839 0.839 0.840 0.841 0.842 0.843 0.844 0.845 0.847 0.845 0.842 0.839 0.836 0.832 0.831 0.831 0.831 0.831 0.831 0.835 0.839 0.844 0.849 0.853 0.858 0.863 0.869 0.875 0.882 0.888 0.894 0.904 0.913 0.922 0.932 0.941"/><feFuncG type="table" tableValues="0.047 0.050 0.054 0.058 0.063 0.067 0.072 0.077 0.082 0.086 0.093 0.100 0.107 0.115 0.122 0.129 0.135 0.138 0.142 0.145 0.153 0.162 0.170 0.177 0.184 0.191 0.198 0.205 0.213 0.220 0.229 0.238 0.248 0.257 0.267 0.276 0.285 0.295 0.304 0.314 0.324 0.335 0.345 0.358 0.371 0.384 0.398 0.414 0.431 0.447 0.466 0.485 0.504 0.522 0.541 0.560 0.579 0.598 0.616 0.635 0.654 0.673 0.692 0.711 0.729 0.748 0.767 0.786 0.805 0.824 0.845 0.866 0.887 0.899 0.906 0.913 0.918 0.918 0.918 0.918 0.922 0.927 0.932 0.936 0.941 0.946 0.950 0.954 0.957 0.933 0.910 0.887 0.865 0.843 0.821 0.799 0.777 0.756 0.735 0.714 0.693 0.671 0.650 0.631 0.612 0.593 0.574 0.555 0.534 0.512 0.490 0.468 0.447 0.420 0.392 0.364 0.334 0.301 0.268 0.235 0.193 0.151 0.108 0.091 0.086 0.082 0.079 0.083 0.086 0.089 0.092 0.095 0.096 0.098 0.099 0.101 0.102 0.104 0.105 0.106 0.107 0.108 0.109 0.112 0.115 0.118 0.121 0.124 0.130 0.136 0.142 0.148 0.155 0.179 0.212 0.245 0.278 0.311 0.344 0.376 0.433 0.489 0.546 0.602 0.659 0.706 0.753 0.800 0.847 0.894"/><feFuncB type="table" tableValues="0.173 0.183 0.193 0.204 0.216 0.227 0.240 0.254 0.268 0.282 0.299 0.315 0.332 0.348 0.365 0.381 0.398 0.417 0.436 0.455 0.478 0.502 0.525 0.547 0.569 0.590 0.612 0.635 0.659 0.682 0.708 0.734 0.760 0.784 0.808 0.831 0.853 0.869 0.885 0.902 0.902 0.902 0.902 0.889 0.871 0.852 0.830 0.802 0.773 0.745 0.715 0.684 0.653 0.623 0.592 0.562 0.531 0.500 0.470 0.439 0.411 0.383 0.355 0.328 0.302 0.276 0.251 0.227 0.204 0.180 0.166 0.152 0.138 0.129 0.122 0.115 0.109 0.107 0.104 0.102 0.100 0.097 0.095 0.094 0.094 0.094 0.093 0.090 0.086 0.089 0.092 0.095 0.096 0.098 0.099 0.101 0.102 0.104 0.105 0.106 0.107 0.108 0.109 0.110 0.110 0.110 0.110 0.110 0.109 0.107 0.106 0.104 0.102 0.100 0.098 0.096 0.093 0.088 0.083 0.078 0.078 0.078 0.078 0.094 0.118 0.141 0.165 0.190 0.215 0.241 0.266 0.293 0.324 0.356 0.387 0.418 0.449 0.477 0.505 0.533 0.562 0.590 0.618 0.648 0.680 0.711 0.742 0.774 0.799 0.821 0.843 0.865 0.887 0.894 0.894 0.894 0.894 0.894 0.894 0.894 0.894 0.894 0.894 0.894 0.894 0.904 0.913 0.922 0.932 0.941"/></feComponentTransfer></filter><clipPath id="thc"><rect x="116" y="161" width="990" height="792"/></clipPath></defs><g clip-path="url(#thc)"><g filter="url(#cmap)"><rect x="116" y="161" width="990.0" height="792.0" rx="0" fill="#1d1d1d"/><g filter="url(#bl3)"><rect x="160" y="317" width="940.0" height="643.0" rx="0" fill="#222222"/><rect x="640" y="300" width="460.0" height="30.0" rx="0" fill="#222222"/></g><g filter="url(#bl12)"><linearGradient id="bdg" x1="0" y1="300" x2="0" y2="953" gradientUnits="userSpaceOnUse"><stop offset="0" stop-color="#262626"/><stop offset=".14" stop-color="#272727"/><stop offset=".28" stop-color="#2b2b2b"/><stop offset=".4" stop-color="#2e2e2e"/><stop offset=".7" stop-color="#2d2d2d"/><stop offset="1" stop-color="#292929"/></linearGradient><path d="M100 433H160V392H644V300H780L800 270H1094V970H100z" fill="url(#bdg)"/></g><radialGradient id="rg1" cx="329" cy="532" r="175" gradientUnits="userSpaceOnUse"><stop offset="0" stop-color="#3e3e3e" stop-opacity="1.0"/><stop offset=".45" stop-color="#3e3e3e" stop-opacity="0.55"/><stop offset="1" stop-color="#3e3e3e" stop-opacity="0"/></radialGradient><circle cx="329" cy="532" r="175" fill="url(#rg1)"/><radialGradient id="rg1b" cx="329" cy="530" r="70" gradientUnits="userSpaceOnUse"><stop offset="0" stop-color="#434343" stop-opacity="0.85"/><stop offset=".45" stop-color="#434343" stop-opacity="0.47"/><stop offset="1" stop-color="#434343" stop-opacity="0"/></radialGradient><circle cx="329" cy="530" r="70" fill="url(#rg1b)"/><g filter="url(#bl20)"><ellipse cx="329" cy="530" rx="30" ry="30" fill="#434343" opacity="0.9"/></g><g filter="url(#bl10)"><ellipse cx="329" cy="529" rx="34" ry="34" fill="#424242" opacity="0.85"/></g><radialGradient id="rg2" cx="620" cy="560" r="330" gradientUnits="userSpaceOnUse"><stop offset="0" stop-color="#333333" stop-opacity="0.9"/><stop offset=".45" stop-color="#333333" stop-opacity="0.50"/><stop offset="1" stop-color="#333333" stop-opacity="0"/></radialGradient><circle cx="620" cy="560" r="330" fill="url(#rg2)"/><radialGradient id="rg3" cx="960" cy="470" r="200" gradientUnits="userSpaceOnUse"><stop offset="0" stop-color="#353535" stop-opacity="0.8"/><stop offset=".45" stop-color="#353535" stop-opacity="0.44"/><stop offset="1" stop-color="#353535" stop-opacity="0"/></radialGradient><circle cx="960" cy="470" r="200" fill="url(#rg3)"/><radialGradient id="rg4" cx="830" cy="720" r="260" gradientUnits="userSpaceOnUse"><stop offset="0" stop-color="#323232" stop-opacity="0.7"/><stop offset=".45" stop-color="#323232" stop-opacity="0.39"/><stop offset="1" stop-color="#323232" stop-opacity="0"/></radialGradient><circle cx="830" cy="720" r="260" fill="url(#rg4)"/><radialGradient id="rg5" cx="200" cy="640" r="200" gradientUnits="userSpaceOnUse"><stop offset="0" stop-color="#2f2f2f" stop-opacity="0.5"/><stop offset=".45" stop-color="#2f2f2f" stop-opacity="0.28"/><stop offset="1" stop-color="#2f2f2f" stop-opacity="0"/></radialGradient><circle cx="200" cy="640" r="200" fill="url(#rg5)"/><radialGradient id="rg6" cx="197" cy="872" r="100" gradientUnits="userSpaceOnUse"><stop offset="0" stop-color="#434343" stop-opacity="0.9"/><stop offset=".45" stop-color="#434343" stop-opacity="0.50"/><stop offset="1" stop-color="#434343" stop-opacity="0"/></radialGradient><circle cx="197" cy="872" r="100" fill="url(#rg6)"/><radialGradient id="rg7" cx="660" cy="450" r="200" gradientUnits="userSpaceOnUse"><stop offset="0" stop-color="#424242" stop-opacity="0.9"/><stop offset=".45" stop-color="#424242" stop-opacity="0.50"/><stop offset="1" stop-color="#424242" stop-opacity="0"/></radialGradient><circle cx="660" cy="450" r="200" fill="url(#rg7)"/><radialGradient id="rg11" cx="630" cy="520" r="280" gradientUnits="userSpaceOnUse"><stop offset="0" stop-color="#3f3f3f" stop-opacity="0.8"/><stop offset=".45" stop-color="#3f3f3f" stop-opacity="0.44"/><stop offset="1" stop-color="#3f3f3f" stop-opacity="0"/></radialGradient><circle cx="630" cy="520" r="280" fill="url(#rg11)"/><radialGradient id="rg12" cx="700" cy="620" r="150" gradientUnits="userSpaceOnUse"><stop offset="0" stop-color="#3e3e3e" stop-opacity="0.6"/><stop offset=".45" stop-color="#3e3e3e" stop-opacity="0.33"/><stop offset="1" stop-color="#3e3e3e" stop-opacity="0"/></radialGradient><circle cx="700" cy="620" r="150" fill="url(#rg12)"/><radialGradient id="rg10" cx="440" cy="580" r="260" gradientUnits="userSpaceOnUse"><stop offset="0" stop-color="#353535" stop-opacity="0.7"/><stop offset=".45" stop-color="#353535" stop-opacity="0.39"/><stop offset="1" stop-color="#353535" stop-opacity="0"/></radialGradient><circle cx="440" cy="580" r="260" fill="url(#rg10)"/><radialGradient id="rg8" cx="560" cy="560" r="120" gradientUnits="userSpaceOnUse"><stop offset="0" stop-color="#3d3d3d" stop-opacity="0.7"/><stop offset=".45" stop-color="#3d3d3d" stop-opacity="0.39"/><stop offset="1" stop-color="#3d3d3d" stop-opacity="0"/></radialGradient><circle cx="560" cy="560" r="120" fill="url(#rg8)"/><radialGradient id="rg9" cx="1060" cy="300" r="170" gradientUnits="userSpaceOnUse"><stop offset="0" stop-color="#262626" stop-opacity="0.6"/><stop offset=".45" stop-color="#262626" stop-opacity="0.33"/><stop offset="1" stop-color="#262626" stop-opacity="0"/></radialGradient><circle cx="1060" cy="300" r="170" fill="url(#rg9)"/><g filter="url(#bl2)"><rect x="303" y="332" width="338.0" height="55.0" rx="0" fill="#202020"/><rect x="553" y="341" width="88.0" height="42.0" rx="0" fill="#1e1e1e"/><rect x="596" y="386" width="20.0" height="7.0" rx="0" fill="#202020"/><rect x="405" y="353" width="147.0" height="23.0" rx="0" fill="#232323" opacity="0.6"/><ellipse cx="228" cy="357" rx="35" ry="35" fill="#1f1f1f"/><rect x="126" y="465" width="37.0" height="58.0" rx="0" fill="#222222"/><rect x="286" y="800" width="167.0" height="160.0" rx="0" fill="#222222"/><rect x="453" y="790" width="92.0" height="170.0" rx="0" fill="#282828" opacity="0.8"/><ellipse cx="231" cy="937" rx="33" ry="33" fill="#212121"/><ellipse cx="973" cy="940" rx="33" ry="33" fill="#222222"/><rect x="116" y="317" width="44.0" height="116.0" rx="0" fill="#1d1d1d"/></g><g filter="url(#bl4)"><rect x="1093" y="161" width="17.0" height="799.0" rx="0" fill="#1f1f1f"/></g><g filter="url(#bl6)"><rect x="621.5" y="671" width="136.0" height="136.0" rx="6" fill="#3b3b3b"/></g><g filter="url(#bl2)"><rect x="627.5" y="677" width="124.0" height="124.0" rx="2" fill="#414141"/></g><g filter="url(#bl4)"><path d="M672.2 705.8L653.8 724.2L626.5 676z" fill="#4d4d4d" opacity="0.9"/><path d="M672.2 774.2L653.8 755.8L626.5 802z" fill="#4d4d4d" opacity="0.9"/><path d="M703.8 705.8L722.2 724.2L752.5 676z" fill="#4d4d4d" opacity="0.9"/><path d="M703.8 774.2L722.2 755.8L752.5 802z" fill="#4d4d4d" opacity="0.9"/></g><g filter="url(#bl3)"><path d="M669.0 709.0L657.0 721.0L637.5 687z" fill="#585858" opacity="0.9"/><path d="M669.0 771.0L657.0 759.0L637.5 791z" fill="#585858" opacity="0.9"/><path d="M707.0 709.0L719.0 721.0L741.5 687z" fill="#585858" opacity="0.9"/><path d="M707.0 771.0L719.0 759.0L741.5 791z" fill="#585858" opacity="0.9"/></g><g filter="url(#bl5)"><rect x="650.0" y="702" width="76.0" height="76.0" rx="8" fill="#515151" opacity="0.85"/></g><g filter="url(#bl3)"><rect x="654.5" y="706.5" width="67.0" height="67.0" rx="5" fill="#6f6f6f"/></g><g filter="url(#bl3)"><rect x="660.0" y="712" width="56.0" height="56.0" rx="3" fill="#838383"/></g><g filter="url(#bl5)"><ellipse cx="680.0" cy="737" rx="9" ry="11" fill="#909090" opacity="0.85"/></g><g filter="url(#bl6)"><rect x="888.5" y="672" width="136.0" height="136.0" rx="6" fill="#3b3b3b"/></g><g filter="url(#bl2)"><rect x="894.5" y="678" width="124.0" height="124.0" rx="2" fill="#414141"/></g><g filter="url(#bl4)"><path d="M939.2 706.8L920.8 725.2L893.5 677z" fill="#4d4d4d" opacity="0.9"/><path d="M939.2 775.2L920.8 756.8L893.5 803z" fill="#4d4d4d" opacity="0.9"/><path d="M970.8 706.8L989.2 725.2L1019.5 677z" fill="#4d4d4d" opacity="0.9"/><path d="M970.8 775.2L989.2 756.8L1019.5 803z" fill="#4d4d4d" opacity="0.9"/></g><g filter="url(#bl3)"><path d="M936.0 710.0L924.0 722.0L904.5 688z" fill="#585858" opacity="0.9"/><path d="M936.0 772.0L924.0 760.0L904.5 792z" fill="#585858" opacity="0.9"/><path d="M974.0 710.0L986.0 722.0L1008.5 688z" fill="#585858" opacity="0.9"/><path d="M974.0 772.0L986.0 760.0L1008.5 792z" fill="#585858" opacity="0.9"/></g><g filter="url(#bl5)"><rect x="917.0" y="703" width="76.0" height="76.0" rx="8" fill="#515151" opacity="0.85"/></g><g filter="url(#bl3)"><rect x="921.5" y="707.5" width="67.0" height="67.0" rx="5" fill="#6f6f6f"/></g><g filter="url(#bl3)"><rect x="927.0" y="713" width="56.0" height="56.0" rx="3" fill="#838383"/></g><g filter="url(#bl5)"><ellipse cx="947.0" cy="738" rx="9" ry="11" fill="#909090" opacity="0.85"/></g><g filter="url(#bl3)"><rect x="898" y="406" width="125.0" height="124.0" rx="2" fill="#393939" opacity="0.9"/></g><g filter="url(#bl4)"><path d="M942 431L924 449L899 406z" fill="#3f3f3f" opacity="0.8"/><path d="M942 505L924 487L899 530z" fill="#3f3f3f" opacity="0.8"/><path d="M980 431L998 449L1023 406z" fill="#3f3f3f" opacity="0.8"/><path d="M980 505L998 487L1023 530z" fill="#3f3f3f" opacity="0.8"/></g><g filter="url(#bl4)"><rect x="929" y="436" width="65.0" height="64.0" rx="2" fill="#434343"/></g><g filter="url(#bl8)"><rect x="612" y="388" width="158.0" height="156.0" rx="8" fill="#494949"/></g><g filter="url(#bl1_5)"><rect x="627" y="402" width="128.0" height="127.0" rx="4" fill="#7a7a7a"/></g><g filter="url(#bl4)"><ellipse cx="691" cy="416.5" rx="34" ry="10.5" fill="#6b6b6b"/><ellipse cx="691" cy="512.5" rx="34" ry="10.5" fill="#6b6b6b"/><ellipse cx="643" cy="464.5" rx="10.5" ry="34" fill="#6b6b6b"/><ellipse cx="739" cy="464.5" rx="10.5" ry="34" fill="#6b6b6b"/></g><g filter="url(#bl3)"><path d="M672.1 431.4L657.9 445.6L627 400.5z" fill="#848484"/><path d="M672.1 497.6L657.9 483.4L627 528.5z" fill="#848484"/><path d="M709.9 431.4L724.1 445.6L755 400.5z" fill="#848484"/><path d="M709.9 497.6L724.1 483.4L755 528.5z" fill="#848484"/></g><g filter="url(#bl2)"><path d="M670.3 433.2L659.7 443.8L635 408.5z" fill="#8f8f8f"/><path d="M670.3 495.8L659.7 485.2L635 520.5z" fill="#8f8f8f"/><path d="M711.7 433.2L722.3 443.8L747 408.5z" fill="#8f8f8f"/><path d="M711.7 495.8L722.3 485.2L747 520.5z" fill="#8f8f8f"/></g><g filter="url(#bl2)"><path d="M668.9 434.6L661.1 442.4L643 416.5z" fill="#9e9e9e"/><path d="M668.9 494.4L661.1 486.6L643 512.5z" fill="#9e9e9e"/><path d="M713.1 434.6L720.9 442.4L739 416.5z" fill="#9e9e9e"/><path d="M713.1 494.4L720.9 486.6L739 512.5z" fill="#9e9e9e"/></g><g filter="url(#bl3)"><rect x="653" y="426.5" width="76.0" height="76.5" rx="9" fill="#8b8b8b"/></g><g filter="url(#bl2)"><rect x="655.5" y="429.0" width="71.0" height="71.5" rx="8" fill="#a2a2a2"/></g><g filter="url(#bl1_5)"><rect x="658.5" y="432.0" width="65.0" height="65.5" rx="7" fill="#bcbcbc"/></g><g filter="url(#bl1_5)"><rect x="661" y="434.5" width="60.0" height="60.5" rx="7" fill="#cccccc"/></g><g filter="url(#bl2)"><rect x="663.5" y="436.5" width="55.0" height="55.5" rx="6" fill="#d8d8d8"/></g><g filter="url(#bl4)"><rect x="670" y="440.5" width="42.0" height="43.0" rx="4" fill="#e5e5e5"/></g><g filter="url(#bl6)"><rect x="518" y="548" width="48.0" height="82.0" rx="4" fill="#454545"/></g><g filter="url(#bl2)"><rect x="523" y="554" width="38.0" height="71.0" rx="2" fill="#6f6f6f"/></g><g filter="url(#bl3)"><rect x="528" y="560" width="29.0" height="47.0" rx="5" fill="#7f7f7f"/><path d="M536 600H550L553 622H533z" fill="#898989"/></g><g filter="url(#bl3)"><ellipse cx="543" cy="588" rx="12" ry="15" fill="#9d9d9d"/></g><g filter="url(#bl1_5)"><rect x="533.5" y="577" width="19.0" height="23.0" rx="3" fill="#bfbfbf"/></g><g filter="url(#bl2)"><ellipse cx="543.5" cy="590" rx="5" ry="6" fill="#cacaca"/></g><g filter="url(#bl12)"><ellipse cx="197" cy="869" rx="50" ry="56" fill="#4e4e4e"/></g><g filter="url(#bl8)"><ellipse cx="197" cy="868" rx="36" ry="40" fill="#595959"/></g><g filter="url(#bl3)"><rect x="171" y="831" width="52.0" height="21.0" rx="5" fill="#616161"/></g><g filter="url(#bl2_5)"><rect x="166.5" y="846" width="63.0" height="40.0" rx="8" fill="#717171"/><rect x="184" y="880" width="34.0" height="25.0" rx="3" fill="#6d6d6d"/></g><g filter="url(#bl1_5)"><path d="M169.500 859L176 851.500H220L226.500 859V876L220 882.500H176L169.500 876z" fill="#878787"/></g><g filter="url(#bl2)"><path d="M172.500 860L178 853.500H218L223.500 860V875L218 880.500H178L172.500 875z" fill="#9d9d9d"/></g><g filter="url(#bl1_5)"><rect x="183" y="851.5" width="28.5" height="30.0" rx="5" fill="#bdbdbd"/></g><g filter="url(#bl1_5)"><rect x="185.5" y="854" width="23.5" height="25.5" rx="5" fill="#cdcdcd"/></g><g filter="url(#bl3)"><rect x="189" y="857" width="16.5" height="19.0" rx="4" fill="#dddddd"/></g><g filter="url(#bl1)"><path d="M174.5 848L178.0 835" stroke="#3b3b3b" stroke-width="3.200" stroke-linecap="round"/><path d="M196 848L199.5 835" stroke="#3b3b3b" stroke-width="3.200" stroke-linecap="round"/><path d="M216 848L219.5 835" stroke="#3b3b3b" stroke-width="3.200" stroke-linecap="round"/><path d="M189.500 891.500L212 888.500L211.500 897L190 899.500z" fill="#3d3d3d"/></g><g filter="url(#bl2)"><ellipse cx="231" cy="937" rx="33" ry="33" fill="#212121"/><rect x="286" y="800" width="167.0" height="160.0" rx="0" fill="#222222"/></g><g filter="url(#bl6)"><rect x="1039" y="585" width="54.0" height="41.0" rx="4" fill="#474747"/></g><g filter="url(#bl4)"><rect x="1044" y="590" width="44.0" height="31.0" rx="3" fill="#5e5e5e"/></g><g filter="url(#bl4)"><rect x="1049" y="595" width="34.0" height="21.0" rx="3" fill="#747474"/></g><g filter="url(#bl6)"><rect x="771" y="858" width="52.0" height="37.0" rx="4" fill="#474747"/></g><g filter="url(#bl4)"><rect x="776" y="863" width="42.0" height="27.0" rx="3" fill="#5e5e5e"/></g><g filter="url(#bl4)"><rect x="781" y="868" width="32.0" height="17.0" rx="3" fill="#707070"/></g><g filter="url(#bl6)"><rect x="1038" y="857" width="48.0" height="38.0" rx="4" fill="#474747"/></g><g filter="url(#bl4)"><rect x="1043" y="862" width="38.0" height="28.0" rx="3" fill="#5e5e5e"/></g><g filter="url(#bl4)"><rect x="1048" y="867" width="28.0" height="18.0" rx="3" fill="#717171"/></g><g filter="url(#bl3)"><rect x="521" y="452" width="40.0" height="75.0" rx="2" fill="#3e3e3e"/></g><g filter="url(#bl6)"><ellipse cx="541.5" cy="487" rx="10" ry="16" fill="#5a5a5a"/></g><g filter="url(#bl4)"><rect x="666" y="318" width="91.0" height="43.0" rx="3" fill="#4a4a4a"/></g><g filter="url(#bl8)"><ellipse cx="711" cy="337" rx="30" ry="15" fill="#5c5c5c"/></g><g filter="url(#bl5)"><ellipse cx="710.5" cy="336" rx="17" ry="10" fill="#747474"/></g><path d="M634.4 390V401M639.1 390V401M643.8 390V401M648.5 390V401M653.2 390V401M658.0 390V401M662.7 390V401M667.4 390V401M672.1 390V401M676.8 390V401M681.6 390V401M686.3 390V401M691.0 390V401M695.7 390V401M700.4 390V401M705.2 390V401M709.9 390V401M714.6 390V401M719.3 390V401M724.0 390V401M728.8 390V401M733.5 390V401M738.2 390V401M742.9 390V401M747.6 390V401" stroke="#000" stroke-width="2.12" opacity="0.2" fill="none"/><path d="M634.4 530V541M639.1 530V541M643.8 530V541M648.5 530V541M653.2 530V541M658.0 530V541M662.7 530V541M667.4 530V541M672.1 530V541M676.8 530V541M681.6 530V541M686.3 530V541M691.0 530V541M695.7 530V541M700.4 530V541M705.2 530V541M709.9 530V541M714.6 530V541M719.3 530V541M724.0 530V541M728.8 530V541M733.5 530V541M738.2 530V541M742.9 530V541M747.6 530V541" stroke="#000" stroke-width="2.12" opacity="0.2" fill="none"/><path d="M614 409.3H626M614 414.0H626M614 418.7H626M614 423.4H626M614 428.1H626M614 432.7H626M614 437.4H626M614 442.1H626M614 446.8H626M614 451.5H626M614 456.1H626M614 460.8H626M614 465.5H626M614 470.2H626M614 474.9H626M614 479.5H626M614 484.2H626M614 488.9H626M614 493.6H626M614 498.3H626M614 502.9H626M614 507.6H626M614 512.3H626M614 517.0H626M614 521.7H626" stroke="#000" stroke-width="2.11" opacity="0.2" fill="none"/><path d="M756 409.3H768M756 414.0H768M756 418.7H768M756 423.4H768M756 428.1H768M756 432.7H768M756 437.4H768M756 442.1H768M756 446.8H768M756 451.5H768M756 456.1H768M756 460.8H768M756 465.5H768M756 470.2H768M756 474.9H768M756 479.5H768M756 484.2H768M756 488.9H768M756 493.6H768M756 498.3H768M756 502.9H768M756 507.6H768M756 512.3H768M756 517.0H768M756 521.7H768" stroke="#000" stroke-width="2.11" opacity="0.2" fill="none"/><path d="M906.8 391V403M912.4 391V403M918.0 391V403M923.6 391V403M929.2 391V403M934.8 391V403M940.4 391V403M946.0 391V403M951.6 391V403M957.2 391V403M962.8 391V403M968.4 391V403M974.0 391V403M979.6 391V403M985.2 391V403M990.8 391V403M996.4 391V403M1002.0 391V403M1007.6 391V403M1013.2 391V403" stroke="#000" stroke-width="2.52" opacity="0.17" fill="none"/><path d="M906.8 532V545M912.4 532V545M918.0 532V545M923.6 532V545M929.2 532V545M934.8 532V545M940.4 532V545M946.0 532V545M951.6 532V545M957.2 532V545M962.8 532V545M968.4 532V545M974.0 532V545M979.6 532V545M985.2 532V545M990.8 532V545M996.4 532V545M1002.0 532V545M1007.6 532V545M1013.2 532V545" stroke="#000" stroke-width="2.52" opacity="0.17" fill="none"/><path d="M883 413.8H897M883 419.5H897M883 425.1H897M883 430.8H897M883 436.4H897M883 442.1H897M883 447.7H897M883 453.4H897M883 459.0H897M883 464.7H897M883 470.3H897M883 476.0H897M883 481.6H897M883 487.3H897M883 492.9H897M883 498.6H897M883 504.2H897M883 509.9H897M883 515.5H897M883 521.2H897" stroke="#000" stroke-width="2.54" opacity="0.17" fill="none"/><path d="M1023 413.8H1035M1023 419.5H1035M1023 425.1H1035M1023 430.8H1035M1023 436.4H1035M1023 442.1H1035M1023 447.7H1035M1023 453.4H1035M1023 459.0H1035M1023 464.7H1035M1023 470.3H1035M1023 476.0H1035M1023 481.6H1035M1023 487.3H1035M1023 492.9H1035M1023 498.6H1035M1023 504.2H1035M1023 509.9H1035M1023 515.5H1035M1023 521.2H1035" stroke="#000" stroke-width="2.54" opacity="0.17" fill="none"/><path d="M635.8 662V675M641.5 662V675M647.1 662V675M652.8 662V675M658.4 662V675M664.1 662V675M669.7 662V675M675.4 662V675M681.0 662V675M686.7 662V675M692.3 662V675M698.0 662V675M703.6 662V675M709.3 662V675M714.9 662V675M720.6 662V675M726.2 662V675M731.9 662V675M737.5 662V675M743.2 662V675" stroke="#000" stroke-width="2.54" opacity="0.19" fill="none"/><path d="M635.8 803V815M641.5 803V815M647.1 803V815M652.8 803V815M658.4 803V815M664.1 803V815M669.7 803V815M675.4 803V815M681.0 803V815M686.7 803V815M692.3 803V815M698.0 803V815M703.6 803V815M709.3 803V815M714.9 803V815M720.6 803V815M726.2 803V815M731.9 803V815M737.5 803V815M743.2 803V815" stroke="#000" stroke-width="2.54" opacity="0.19" fill="none"/><path d="M610 685.9H624M610 691.5H624M610 697.2H624M610 703.0H624M610 708.6H624M610 714.4H624M610 720.0H624M610 725.8H624M610 731.5H624M610 737.1H624M610 742.9H624M610 748.5H624M610 754.2H624M610 760.0H624M610 765.6H624M610 771.4H624M610 777.0H624M610 782.8H624M610 788.5H624M610 794.1H624" stroke="#000" stroke-width="2.56" opacity="0.19" fill="none"/><path d="M753 685.9H766M753 691.5H766M753 697.2H766M753 703.0H766M753 708.6H766M753 714.4H766M753 720.0H766M753 725.8H766M753 731.5H766M753 737.1H766M753 742.9H766M753 748.5H766M753 754.2H766M753 760.0H766M753 765.6H766M753 771.4H766M753 777.0H766M753 782.8H766M753 788.5H766M753 794.1H766" stroke="#000" stroke-width="2.56" opacity="0.19" fill="none"/><path d="M903.8 663V676M909.4 663V676M915.0 663V676M920.6 663V676M926.2 663V676M931.8 663V676M937.4 663V676M943.0 663V676M948.6 663V676M954.2 663V676M959.8 663V676M965.4 663V676M971.0 663V676M976.6 663V676M982.2 663V676M987.8 663V676M993.4 663V676M999.0 663V676M1004.6 663V676M1010.2 663V676" stroke="#000" stroke-width="2.52" opacity="0.19" fill="none"/><path d="M903.8 804V815M909.4 804V815M915.0 804V815M920.6 804V815M926.2 804V815M931.8 804V815M937.4 804V815M943.0 804V815M948.6 804V815M954.2 804V815M959.8 804V815M965.4 804V815M971.0 804V815M976.6 804V815M982.2 804V815M987.8 804V815M993.4 804V815M999.0 804V815M1004.6 804V815M1010.2 804V815" stroke="#000" stroke-width="2.52" opacity="0.19" fill="none"/><path d="M879 685.9H893M879 691.5H893M879 697.2H893M879 703.0H893M879 708.6H893M879 714.4H893M879 720.0H893M879 725.8H893M879 731.5H893M879 737.1H893M879 742.9H893M879 748.5H893M879 754.2H893M879 760.0H893M879 765.6H893M879 771.4H893M879 777.0H893M879 782.8H893M879 788.5H893M879 794.1H893" stroke="#000" stroke-width="2.56" opacity="0.19" fill="none"/><path d="M1019 685.9H1033M1019 691.5H1033M1019 697.2H1033M1019 703.0H1033M1019 708.6H1033M1019 714.4H1033M1019 720.0H1033M1019 725.8H1033M1019 731.5H1033M1019 737.1H1033M1019 742.9H1033M1019 748.5H1033M1019 754.2H1033M1019 760.0H1033M1019 765.6H1033M1019 771.4H1033M1019 777.0H1033M1019 782.8H1033M1019 788.5H1033M1019 794.1H1033" stroke="#000" stroke-width="2.56" opacity="0.19" fill="none"/><path d="M673.4 304V318M684.1 304V318M694.9 304V318M705.6 304V318M716.4 304V318M727.1 304V318M737.9 304V318M748.6 304V318" stroke="#000" stroke-width="3.00" opacity="0.2" fill="none"/><path d="M673.4 361V377M684.1 361V377M694.9 361V377M705.6 361V377M716.4 361V377M727.1 361V377M737.9 361V377M748.6 361V377" stroke="#000" stroke-width="3.00" opacity="0.2" fill="none"/><path d="M784.9 302V313M790.6 302V313M796.3 302V313M802.0 302V313M807.7 302V313M813.4 302V313M819.1 302V313M824.9 302V313M830.6 302V313M836.3 302V313M842.0 302V313M847.7 302V313M853.4 302V313M859.1 302V313" stroke="#000" stroke-width="2.57" opacity="0.2" fill="none"/><path d="M784.9 364V378M790.6 364V378M796.3 364V378M802.0 364V378M807.7 364V378M813.4 364V378M819.1 364V378M824.9 364V378M830.6 364V378M836.3 364V378M842.0 364V378M847.7 364V378M853.4 364V378M859.1 364V378" stroke="#000" stroke-width="2.57" opacity="0.2" fill="none"/><path d="M509 459.1H521M509 465.2H521M509 471.4H521M509 477.6H521M509 483.8H521M509 489.9H521M509 496.1H521M509 502.2H521M509 508.4H521M509 514.6H521M509 520.8H521M509 526.9H521" stroke="#000" stroke-width="2.78" opacity="0.19" fill="none"/><path d="M561 459.1H577M561 465.2H577M561 471.4H577M561 477.6H577M561 483.8H577M561 489.9H577M561 496.1H577M561 502.2H577M561 508.4H577M561 514.6H577M561 520.8H577M561 526.9H577" stroke="#000" stroke-width="2.78" opacity="0.19" fill="none"/><path d="M509 560.0H522M509 565.9H522M509 571.8H522M509 577.7H522M509 583.6H522M509 589.5H522M509 595.4H522M509 601.3H522M509 607.2H522M509 613.1H522M509 619.0H522" stroke="#000" stroke-width="2.66" opacity="0.19" fill="none"/><path d="M562 560.0H578M562 565.9H578M562 571.8H578M562 577.7H578M562 583.6H578M562 589.5H578M562 595.4H578M562 601.3H578M562 607.2H578M562 613.1H578M562 619.0H578" stroke="#000" stroke-width="2.66" opacity="0.19" fill="none"/><path d="M453 463.5H464M453 470.5H464M453 477.5H464M453 484.5H464M453 491.5H464M453 498.5H464M453 505.5H464M453 512.5H464M453 519.5H464M453 526.5H464" stroke="#000" stroke-width="3.15" opacity="0.08" fill="none"/><path d="M482 463.5H496M482 470.5H496M482 477.5H496M482 484.5H496M482 491.5H496M482 498.5H496M482 505.5H496M482 512.5H496M482 519.5H496M482 526.5H496" stroke="#000" stroke-width="3.15" opacity="0.08" fill="none"/><path d="M453 548.8H464M453 556.2H464M453 563.8H464M453 571.2H464M453 578.8H464M453 586.2H464M453 593.8H464M453 601.2H464M453 608.8H464M453 616.2H464" stroke="#000" stroke-width="3.38" opacity="0.08" fill="none"/><path d="M482 548.8H496M482 556.2H496M482 563.8H496M482 571.2H496M482 578.8H496M482 586.2H496M482 593.8H496M482 601.2H496M482 608.8H496M482 616.2H496" stroke="#000" stroke-width="3.38" opacity="0.08" fill="none"/><g filter="url(#bl1_5)"><path d="M1052.5 577V590M1061.5 577V590M1070.5 577V590M1079.5 577V590" stroke="#474747" stroke-width="3" opacity=".7" fill="none"/></g><g filter="url(#bl1_5)"><path d="M1052.5 621V640M1061.5 621V640M1070.5 621V640M1079.5 621V640" stroke="#474747" stroke-width="3" opacity=".7" fill="none"/></g><g filter="url(#bl1_5)"><path d="M784.2 848V863M792.8 848V863M801.2 848V863M809.8 848V863" stroke="#474747" stroke-width="3" opacity=".7" fill="none"/></g><g filter="url(#bl1_5)"><path d="M784.2 890V912M792.8 890V912M801.2 890V912M809.8 890V912" stroke="#474747" stroke-width="3" opacity=".7" fill="none"/></g><g filter="url(#bl1_5)"><path d="M1050.9 846V862M1058.6 846V862M1066.4 846V862M1074.1 846V862" stroke="#474747" stroke-width="3" opacity=".7" fill="none"/></g><g filter="url(#bl1_5)"><path d="M1050.9 890V912M1058.6 890V912M1066.4 890V912M1074.1 890V912" stroke="#474747" stroke-width="3" opacity=".7" fill="none"/></g><g filter="url(#bl1_5)"><rect x="663" y="593" width="94" height="40" rx="20.0" fill="#000" opacity="0.2"/><rect x="666" y="596" width="88" height="34" rx="17.0" fill="none" stroke="#fff" stroke-width="1" opacity=".05"/><rect x="904" y="572" width="92" height="36" rx="18.0" fill="#000" opacity="0.2"/><rect x="907" y="575" width="86" height="30" rx="15.0" fill="none" stroke="#fff" stroke-width="1" opacity=".05"/><rect x="898" y="868" width="95" height="37" rx="18.5" fill="#000" opacity="0.19"/><rect x="901" y="871" width="89" height="31" rx="15.5" fill="none" stroke="#fff" stroke-width="1" opacity=".05"/><rect x="634" y="872" width="92" height="35" rx="17.5" fill="#000" opacity="0.12"/><rect x="637" y="875" width="86" height="29" rx="14.5" fill="none" stroke="#fff" stroke-width="1" opacity=".05"/><ellipse cx="614" cy="598" rx="25" ry="25" fill="#262626" opacity="0.75"/><ellipse cx="614" cy="598" rx="14" ry="14" fill="#212121" opacity="0.8"/><rect x="789" y="408" width="50.0" height="115.0" rx="0" fill="#2a2a2a" opacity="0.75"/><rect x="769" y="552" width="67.0" height="10.0" rx="0" fill="#282828" opacity="0.7"/><rect x="769" y="618" width="67.0" height="10.0" rx="0" fill="#282828" opacity="0.7"/><rect x="790" y="562" width="28.0" height="56.0" rx="0" fill="#2a2a2a" opacity="0.7"/><rect x="861" y="813" width="18.0" height="44.0" rx="0" fill="#232323" opacity="0.85"/><rect x="751" y="830" width="23.0" height="55.0" rx="8" fill="#262626" opacity="0.8"/><rect x="1016" y="830" width="25.0" height="53.0" rx="8" fill="#262626" opacity="0.8"/></g><g filter="url(#bl1)"><g filter="url(#bl1_5)"><path d="M463 633H329V737H463" stroke="#000" stroke-width="3" opacity="0.1" fill="none" stroke-linecap="round" stroke-linejoin="round"/></g><path d="M160 434H300M120 400H158" stroke="#000" stroke-width="2" opacity="0.1" fill="none" stroke-linecap="round" stroke-linejoin="round"/><path d="M466 720C480 700 470 690 500 690H560" stroke="#000" stroke-width="3" opacity="0.08" fill="none" stroke-linecap="round" stroke-linejoin="round"/><path d="M1128 150M606 640C620 650 640 648 660 648H752" stroke="#000" stroke-width="2" opacity="0.1" fill="none" stroke-linecap="round" stroke-linejoin="round"/><path d="M596 432L612 448V560M604 440L625 420M620 470V560L640 580" stroke="#000" stroke-width="2" opacity="0.14" fill="none" stroke-linecap="round" stroke-linejoin="round"/><path d="M487 660C500 650 520 648 528 636M560 640H590L600 650H650" stroke="#000" stroke-width="3" opacity="0.1" fill="none" stroke-linecap="round" stroke-linejoin="round"/><path d="M760 560V640L790 660M850 300V380H900" stroke="#000" stroke-width="2" opacity="0.1" fill="none" stroke-linecap="round" stroke-linejoin="round"/><path d="M1090 640V700L1030 760M1040 540L1080 500V300" stroke="#000" stroke-width="3" opacity="0.08" fill="none" stroke-linecap="round" stroke-linejoin="round"/><path d="M520 800V830M560 800V830M600 800V830M640 800V830" stroke="#000" stroke-width="3" opacity="0.12" fill="none" stroke-linecap="round" stroke-linejoin="round"/><path d="M180 700V790M210 690L180 720M300 760L260 800" stroke="#000" stroke-width="3" opacity="0.1" fill="none" stroke-linecap="round" stroke-linejoin="round"/><path d="M387 694v8M601 714v4M597 697v6M598 852h10M525 408h4M1041 423v4M415 721v10M1008 613v10M292 597h4M567 738h8M656 620v6M791 902v8M781 488v8M820 514h8M1071 448h4M307 559v10M210 732h4M1009 551v6M452 442v4M1054 557h8M456 918h10M962 609v4M562 789v6M446 583v10M457 603h6M741 652v8M424 664v4M189 599h10M938 543h10M910 925h6M387 501v10M258 724v8M1044 443v6M581 522h4M1041 570v6M479 847v4M484 470v8M943 651h10M604 850v10M1067 787v4M642 556v8M954 863h8M393 419v6M182 802v6M388 411h10M284 925v10M226 519v4M890 898v6M177 739h10M417 545h10M464 843v4M212 427v10M627 571h8M447 543h8M286 402v10M589 751v10M218 739h8M802 649h6M416 719h10M289 415h8M987 827h8M798 907v10M838 704v4M822 656v6M210 450v4M512 843v8M280 856v10M1037 713h4M868 676h6M852 905v4M240 939h6M807 909h8M625 925v10M1050 624h10M535 879h6M851 895v10M854 479v8M879 763v10M702 931h6M353 708h6M875 478v10M357 713h4M826 863v10M999 881v4M343 540v6M784 420h8M211 499v4M248 450h8M582 796h8M475 636h10M616 468h8M420 759h4M787 599h10M785 753h8M1029 583v4M438 793v6M834 481v8M766 466v6M340 660v6M268 498h10M412 607h6M870 591v8M578 837h4M416 454v4M805 706v10M851 720v6M325 497h8" stroke="#000" stroke-width="2.5" opacity="0.07" fill="none" stroke-linecap="round" stroke-linejoin="round"/></g></g></g></svg>
<svg style="left:0;top:0" width="1920" height="1080"><path d="M627.500 401.500L741 513" stroke="#101010" stroke-width="1.700" fill="none"/><rect x="677" y="445" width="27" height="37" fill="none" stroke="#2a1448" stroke-width="2"/><rect x="565.500" y="408.500" width="17" height="22" fill="none" stroke="#0e1440" stroke-width="2"/><rect x="534.700" y="575.700" width="16.500" height="21.500" fill="none" stroke="#140a0a" stroke-width="2.800"/></svg>
<div class="b" style="left:677.5px;top:412px;width:25.5px;height:26px;background:#f4ee3c;"></div>
<div class="t" style="left:680.25px;top:415.3px;font-size:18px;line-height:21.6px;color:#111;transform:scaleX(0.869);transform-origin:0 50%;">R1</div>
<div class="b" style="left:563.5px;top:374px;width:25.0px;height:26.5px;background:#f4ee3c;"></div>
<div class="t" style="left:565.5px;top:377.6px;font-size:18px;line-height:21.6px;color:#111;transform:scaleX(0.913);transform-origin:0 50%;">R3</div>
<div class="b" style="left:528.5px;top:543px;width:24.5px;height:28.5px;background:#f4ee3c;"></div>
<div class="t" style="left:530.25px;top:547.6px;font-size:18px;line-height:21.6px;color:#111;transform:scaleX(0.913);transform-origin:0 50%;">R2</div>
<div class="b" style="left:740px;top:509px;width:21.5px;height:26px;background:#f4ee3c;"></div>
<div class="t" style="left:742.25px;top:512.3px;font-size:18px;line-height:21.6px;color:#111;transform:scaleX(0.849);transform-origin:0 50%;">L1</div>
<div class="b" style="left:1106px;top:161px;width:96px;height:794px;background:#e3e3e3;"></div>
<div class="b" style="left:1107px;top:161px;width:79px;height:23px;background:#ececec;border:1px solid #d9d9d9;"></div>
<div class="t" style="left:1131.5px;top:165.4px;font-size:12px;line-height:14.4px;color:#222;transform:scaleX(0.966);transform-origin:0 50%;">70,00</div>
<div class="b" style="left:1186px;top:161px;width:14px;height:11.5px;background:#e4e4e4;border:1px solid #cfcfcf;"></div>
<div class="b" style="left:1186px;top:172.5px;width:14px;height:11.5px;background:#e4e4e4;border:1px solid #cfcfcf;"></div>
<svg style="left:1189px;top:163px" width="8" height="20" viewBox="0 0 8 20"><path d="M1 6L4 3L7 6z" fill="#222"/><path d="M1 13.500L4 16.500L7 13.500z" fill="#222"/></svg>
<div class="b" style="left:1106px;top:184px;width:1px;height:725px;background:#f4f4f4;"></div>
<div class="b" style="left:1107px;top:184.5px;width:50px;height:724.5px;background:linear-gradient(to bottom,#f0e4f0 0.00%,#e4a8e4 2.96%,#dc60e4 5.92%,#d428e4 9.86%,#d420c8 12.82%,#d81ca0 15.78%,#d61a70 19.72%,#d61848 22.68%,#d41428 25.64%,#d41814 27.61%,#dc3c14 29.59%,#e05818 31.56%,#e0701a 33.53%,#dc8c1c 36.49%,#dca41c 39.45%,#e4c81a 43.39%,#e8e418 46.35%,#e2f416 47.93%,#c4f218 49.31%,#98ee18 51.28%,#70ea1a 53.25%,#48ea1c 55.23%,#36e422 57.20%,#34d22e 59.17%,#30c242 61.14%,#2eb258 63.12%,#2ca270 65.09%,#2a928a 67.06%,#2882a4 69.03%,#2672be 71.01%,#2464d6 72.98%,#2259e6 74.95%,#1e50e6 76.92%,#1c48d8 78.90%,#1b40c4 80.87%,#1a38ae 82.84%,#19329a 84.81%,#182c88 86.79%,#172574 88.76%,#142264 90.73%,#121c56 92.70%,#101648 94.67%,#0e123c 96.65%,#0c0e32 98.62%,#0a0c2c 100.00%);"></div>
<div class="t" style="left:1124.5px;top:188.4px;font-size:14.5px;line-height:17.4px;color:#1c0f2e;font-weight:bold;transform:scaleX(1.0);transform-origin:0 50%;">&deg;C</div>
<div class="t" style="left:1125.75px;top:249.8px;font-size:11.5px;line-height:13.8px;color:#f3c6f0;transform:scaleX(0.977);transform-origin:0 50%;">65</div>
<div class="b" style="left:1107px;top:256px;width:3px;height:1px;background:#f3c6f0;opacity:.8;"></div>
<div class="b" style="left:1154px;top:256px;width:3px;height:1px;background:#f3c6f0;opacity:.8;"></div>
<div class="t" style="left:1125.75px;top:321.4px;font-size:11.5px;line-height:13.8px;color:#f6b9d2;transform:scaleX(0.977);transform-origin:0 50%;">60</div>
<div class="b" style="left:1107px;top:328px;width:3px;height:1px;background:#f6b9d2;opacity:.8;"></div>
<div class="b" style="left:1154px;top:328px;width:3px;height:1px;background:#f6b9d2;opacity:.8;"></div>
<div class="t" style="left:1125.75px;top:393.0px;font-size:11.5px;line-height:13.8px;color:#fbc3a4;transform:scaleX(0.977);transform-origin:0 50%;">55</div>
<div class="b" style="left:1107px;top:399px;width:3px;height:1px;background:#fbc3a4;opacity:.8;"></div>
<div class="b" style="left:1154px;top:399px;width:3px;height:1px;background:#fbc3a4;opacity:.8;"></div>
<div class="t" style="left:1125.75px;top:464.6px;font-size:11.5px;line-height:13.8px;color:#3a2a08;transform:scaleX(0.977);transform-origin:0 50%;">50</div>
<div class="b" style="left:1107px;top:471px;width:3px;height:1px;background:#3a2a08;opacity:.8;"></div>
<div class="b" style="left:1154px;top:471px;width:3px;height:1px;background:#3a2a08;opacity:.8;"></div>
<div class="t" style="left:1125.75px;top:536.2px;font-size:11.5px;line-height:13.8px;color:#28360a;transform:scaleX(0.977);transform-origin:0 50%;">45</div>
<div class="b" style="left:1107px;top:542px;width:3px;height:1px;background:#28360a;opacity:.8;"></div>
<div class="b" style="left:1154px;top:542px;width:3px;height:1px;background:#28360a;opacity:.8;"></div>
<div class="t" style="left:1125.75px;top:607.8px;font-size:11.5px;line-height:13.8px;color:#0a5214;transform:scaleX(0.977);transform-origin:0 50%;">40</div>
<div class="b" style="left:1107px;top:614px;width:3px;height:1px;background:#0a5214;opacity:.8;"></div>
<div class="b" style="left:1154px;top:614px;width:3px;height:1px;background:#0a5214;opacity:.8;"></div>
<div class="t" style="left:1125.75px;top:679.4px;font-size:11.5px;line-height:13.8px;color:#bfe9ee;transform:scaleX(0.977);transform-origin:0 50%;">35</div>
<div class="b" style="left:1107px;top:686px;width:3px;height:1px;background:#bfe9ee;opacity:.8;"></div>
<div class="b" style="left:1154px;top:686px;width:3px;height:1px;background:#bfe9ee;opacity:.8;"></div>
<div class="t" style="left:1125.75px;top:751.0px;font-size:11.5px;line-height:13.8px;color:#c6d7f7;transform:scaleX(0.977);transform-origin:0 50%;">30</div>
<div class="b" style="left:1107px;top:757px;width:3px;height:1px;background:#c6d7f7;opacity:.8;"></div>
<div class="b" style="left:1154px;top:757px;width:3px;height:1px;background:#c6d7f7;opacity:.8;"></div>
<div class="t" style="left:1125.75px;top:822.6px;font-size:11.5px;line-height:13.8px;color:#c3cbee;transform:scaleX(0.977);transform-origin:0 50%;">25</div>
<div class="b" style="left:1107px;top:829px;width:3px;height:1px;background:#c3cbee;opacity:.8;"></div>
<div class="b" style="left:1154px;top:829px;width:3px;height:1px;background:#c3cbee;opacity:.8;"></div>
<svg style="left:1147px;top:899px" width="9" height="9" viewBox="0 0 9 9"><path d="M1 5V1H5" stroke="#dfe3f0" fill="none"/><rect x="3.500" y="3.500" width="4" height="4" fill="none" stroke="#dfe3f0"/></svg>
<div class="b" style="left:1166px;top:186px;width:34px;height:722px;background:#e0e0e0;"></div>
<div class="b" style="left:1172.5px;top:191.5px;width:13.5px;height:712px;background:#ececec;border:1px solid #d6d6d6;"></div>
<div class="b" style="left:1174px;top:471px;width:4px;height:338px;background:#e7a5ae;"></div>
<div class="b" style="left:1174.8px;top:471px;width:2.4px;height:338px;background:#b5152a;"></div>
<div class="b" style="left:1169.5px;top:424px;width:20px;height:10px;background:#f1f1f1;border:1px solid #7c7c7c;"></div>
<div class="b" style="left:1169.5px;top:824.5px;width:20px;height:9.5px;background:#f1f1f1;border:1px solid #7c7c7c;"></div>
<div class="b" style="left:1174px;top:688px;width:8px;height:1px;background:#111;"></div>
<div class="b" style="left:1174px;top:845.5px;width:8px;height:1px;background:#111;"></div>
<div class="b" style="left:1107px;top:911px;width:79px;height:22px;background:#ececec;border:1px solid #d9d9d9;"></div>
<div class="t" style="left:1131.5px;top:914.4px;font-size:12px;line-height:14.4px;color:#222;transform:scaleX(0.966);transform-origin:0 50%;">19,30</div>
<div class="b" style="left:1186px;top:911px;width:14px;height:11px;background:#e4e4e4;border:1px solid #cfcfcf;"></div>
<div class="b" style="left:1186px;top:922px;width:14px;height:11px;background:#e4e4e4;border:1px solid #cfcfcf;"></div>
<svg style="left:1189px;top:912px" width="8" height="20" viewBox="0 0 8 20"><path d="M1 6L4 3L7 6z" fill="#222"/><path d="M1 13.500L4 16.500L7 13.500z" fill="#222"/></svg>
<div class="b" style="left:1113.0px;top:937.5px;width:13px;height:13px;border-radius:2px;background:linear-gradient(#e0674f,#b5321c);border:1px solid #b5321c;"></div>
<div class="t" style="left:1116.25px;top:938.9px;font-size:10px;line-height:12.0px;color:#fff;font-weight:bold;transform:scaleX(0.974);transform-origin:0 50%;">S</div>
<div class="b" style="left:1136.0px;top:937.5px;width:13px;height:13px;border-radius:2px;background:linear-gradient(#e0674f,#b5321c);border:1px solid #b5321c;"></div>
<div class="t" style="left:1139.25px;top:938.9px;font-size:10px;line-height:12.0px;color:#fff;font-weight:bold;transform:scaleX(0.836);transform-origin:0 50%;">O</div>
<div class="b" style="left:1159.0px;top:937.5px;width:13px;height:13px;border-radius:2px;background:linear-gradient(#5a9be0,#2467b5);border:1px solid #2467b5;"></div>
<div class="t" style="left:1162.25px;top:938.9px;font-size:10px;line-height:12.0px;color:#fff;font-weight:bold;transform:scaleX(0.9);transform-origin:0 50%;">C</div>
<div class="b" style="left:1182.0px;top:937.5px;width:13px;height:13px;border-radius:2px;background:linear-gradient(#5a9be0,#2467b5);border:1px solid #2467b5;"></div>
<div class="t" style="left:1185.25px;top:938.9px;font-size:10px;line-height:12.0px;color:#fff;font-weight:bold;transform:scaleX(0.974);transform-origin:0 50%;">S</div>
<div class="b" style="left:1201px;top:160px;width:719px;height:795px;background:#ebebeb;border:1px solid #cfcfcf;border-left:2px solid #c6c6c6;"></div>
<div class="t" style="left:1523.5px;top:164.3px;font-size:10.5px;line-height:12.6px;color:#333;transform:scaleX(1.053);transform-origin:0 50%;">Profile chart</div>
<div class="t" style="left:1228.5px;top:164.6px;font-size:10px;line-height:12.0px;color:#333;transform:scaleX(0.802);transform-origin:0 50%;">&deg;C</div>
<svg style="left:0;top:0" width="1920" height="1080"><path d="M1247.500 182.3V919.500H1859.7" stroke="#5a5a5a" fill="none" stroke-width="1"/><path d="M1243.5 909.5H1247.500M1245.0 880.5H1247.500M1245.0 851.5H1247.500M1245.0 822.5H1247.500M1245.0 793.5H1247.500M1243.5 764.5H1247.500M1245.0 734.5H1247.500M1245.0 705.5H1247.500M1245.0 676.5H1247.500M1245.0 647.5H1247.500M1243.5 618.5H1247.500M1245.0 589.5H1247.500M1245.0 560.5H1247.500M1245.0 531.5H1247.500M1245.0 502.5H1247.500M1243.5 473.5H1247.500M1245.0 444.5H1247.500M1245.0 415.5H1247.500M1245.0 386.5H1247.500M1245.0 357.5H1247.500M1243.5 328.5H1247.500M1245.0 299.5H1247.500M1245.0 269.5H1247.500M1245.0 240.5H1247.500M1245.0 211.5H1247.500M1243.5 182.5H1247.500M1248.5 919.500v4M1286.5 919.500v2.5M1324.5 919.500v2.5M1362.5 919.500v2.5M1401.5 919.500v2.5M1439.5 919.500v4M1477.5 919.500v2.5M1515.5 919.500v2.5M1554.5 919.500v2.5M1592.5 919.500v2.5M1630.5 919.500v4M1668.5 919.500v2.5M1707.5 919.500v2.5M1745.5 919.500v2.5M1783.5 919.500v2.5M1821.5 919.500v4M1860.5 919.500v2.5" stroke="#5a5a5a" fill="none" stroke-width="1"/><path d="M1247.5 707.8L1251.7 700.6L1253.0 683.8L1255.6 652.6L1257.5 622.8L1259.2 597.5L1260.5 595.5L1263.3 594.0L1269.0 592.0L1274.4 590.1L1278.3 591.4L1284.0 590.3L1289.3 589.7L1297.0 588.0L1308.3 581.3L1311.7 580.5L1316.7 577.5L1323.3 570.8L1333.3 560.8L1343.3 551.7L1355.0 539.2L1365.8 530.0L1376.7 516.7L1385.0 504.2L1389.2 496.7L1395.0 480.0L1400.8 465.8L1406.7 446.7L1411.7 430.0L1419.2 398.3L1423.3 384.2L1430.8 363.3L1435.0 356.7L1436.7 350.0L1441.7 329.2L1450.0 306.7L1456.7 292.5L1463.3 282.5L1468.3 278.0L1473.3 275.8L1478.3 273.8L1481.7 274.2L1488.3 276.7L1491.7 276.2L1496.7 274.2L1500.0 275.3L1504.2 278.0L1508.3 278.3L1516.7 280.5L1523.3 284.2L1526.7 285.3L1530.8 282.5L1535.0 280.8L1540.0 281.3L1546.7 281.2L1551.7 280.5L1556.7 281.7L1560.0 281.3L1568.3 283.3L1572.5 283.0L1576.7 281.0L1585.0 287.2L1591.7 286.3L1595.8 287.2L1603.3 287.2L1608.3 285.8L1618.3 284.5L1624.2 282.0L1630.0 282.2L1633.3 283.3L1640.8 281.2L1650.0 283.3L1655.8 286.7L1661.7 293.3L1666.7 301.7L1676.7 324.2L1688.3 358.3L1696.7 385.0L1706.7 415.0L1712.0 433.0L1715.0 441.7L1723.3 468.3L1733.3 498.3L1740.0 510.0L1753.3 529.2L1765.0 541.7L1775.0 550.3L1786.7 561.7L1795.0 570.0L1808.3 578.8L1820.0 585.8L1825.8 588.3L1829.2 588.3L1833.3 590.0L1840.0 590.3L1845.0 592.5L1856.7 592.0L1859.2 591.2" stroke="#4a4a4a" fill="none" stroke-width="1" stroke-linejoin="round"/><path d="M1880 557.500H1890" stroke="#4a4a4a" stroke-width="1"/></svg>
<div class="t" style="left:1231.5px;top:177.2px;font-size:10px;line-height:12.0px;color:#333;transform:scaleX(0.944);transform-origin:0 50%;">70</div>
<div class="t" style="left:1231.5px;top:322.5px;font-size:10px;line-height:12.0px;color:#333;transform:scaleX(0.944);transform-origin:0 50%;">60</div>
<div class="t" style="left:1231.5px;top:467.8px;font-size:10px;line-height:12.0px;color:#333;transform:scaleX(0.944);transform-origin:0 50%;">50</div>
<div class="t" style="left:1231.5px;top:613.1px;font-size:10px;line-height:12.0px;color:#333;transform:scaleX(0.944);transform-origin:0 50%;">40</div>
<div class="t" style="left:1231.5px;top:758.4px;font-size:10px;line-height:12.0px;color:#333;transform:scaleX(0.944);transform-origin:0 50%;">30</div>
<div class="t" style="left:1231.5px;top:903.7px;font-size:10px;line-height:12.0px;color:#333;transform:scaleX(0.944);transform-origin:0 50%;">20</div>
<div class="t" style="left:1245.0px;top:925.6px;font-size:10px;line-height:12.0px;color:#333;transform:scaleX(0.899);transform-origin:0 50%;">0</div>
<div class="t" style="left:1433.55px;top:925.6px;font-size:10px;line-height:12.0px;color:#333;transform:scaleX(0.944);transform-origin:0 50%;">50</div>
<div class="t" style="left:1622.1px;top:925.6px;font-size:10px;line-height:12.0px;color:#333;transform:scaleX(0.959);transform-origin:0 50%;">100</div>
<div class="t" style="left:1813.4px;top:925.6px;font-size:10px;line-height:12.0px;color:#333;transform:scaleX(0.959);transform-origin:0 50%;">150</div>
<div class="t" style="left:1542.0px;top:941.3px;font-size:10.5px;line-height:12.6px;color:#333;transform:scaleX(0.967);transform-origin:0 50%;">Pixel</div>
<div class="t" style="left:1896px;top:552.6px;font-size:10px;line-height:12.0px;color:#333;transform:scaleX(0.854);transform-origin:0 50%;">L1</div>
<div class="b" style="left:116px;top:953px;width:1804px;height:103px;background:#ebebeb;"></div>
<div class="b" style="left:116px;top:954px;width:1803px;height:20px;background:#e2e2e2;border-top:1px solid #cdcdcd;"></div>
<div class="b" style="left:116px;top:975px;width:19px;height:80px;background:#e4e4e4;"></div>
<div class="b" style="left:116px;top:974px;width:1803px;height:1px;background:#9c9c9c;"></div>
<div class="b" style="left:116px;top:994px;width:1803px;height:1px;background:#bababa;"></div>
<div class="b" style="left:116px;top:1014px;width:1803px;height:1px;background:#bababa;"></div>
<div class="b" style="left:116px;top:1034px;width:1803px;height:1px;background:#bababa;"></div>
<div class="b" style="left:116px;top:1054px;width:1803px;height:1px;background:#bababa;"></div>
<div class="b" style="left:116px;top:954px;width:1px;height:100px;background:#bababa;"></div>
<div class="b" style="left:135px;top:954px;width:1px;height:100px;background:#bababa;"></div>
<div class="b" style="left:491.5px;top:954px;width:1px;height:100px;background:#bababa;"></div>
<div class="b" style="left:848px;top:954px;width:1px;height:100px;background:#bababa;"></div>
<div class="b" style="left:1204.5px;top:954px;width:1px;height:100px;background:#bababa;"></div>
<div class="b" style="left:1561px;top:954px;width:1px;height:100px;background:#bababa;"></div>
<div class="b" style="left:1918.5px;top:954px;width:1px;height:100px;background:#bababa;"></div>
<div class="t" style="left:120.5px;top:960.5px;font-size:11px;line-height:13.2px;color:#222;transform:scaleX(1.045);transform-origin:0 50%;">ID</div>
<svg style="left:116px;top:961px" width="4" height="4" viewBox="0 0 4 4"><path d="M.3 3.500L2 .8L3.700 3.500" stroke="#333" stroke-width=".8" fill="none"/></svg>
<div class="t" style="left:303.0px;top:960.5px;font-size:11px;line-height:13.2px;color:#222;transform:scaleX(1.093);transform-origin:0 50%;">Avg</div>
<div class="t" style="left:660.25px;top:960.5px;font-size:11px;line-height:13.2px;color:#222;transform:scaleX(1.072);transform-origin:0 50%;">Min</div>
<div class="t" style="left:1015.5px;top:960.5px;font-size:11px;line-height:13.2px;color:#222;transform:scaleX(1.035);transform-origin:0 50%;">Max</div>
<div class="t" style="left:1370.25px;top:960.5px;font-size:11px;line-height:13.2px;color:#222;transform:scaleX(0.973);transform-origin:0 50%;">Span</div>
<div class="t" style="left:1726.25px;top:960.5px;font-size:11px;line-height:13.2px;color:#222;transform:scaleX(1.004);transform-origin:0 50%;">SDev</div>
<div class="t" style="left:119.5px;top:980.0px;font-size:11px;line-height:13.2px;color:#222;transform:scaleX(0.853);transform-origin:0 50%;">R1</div>
<div class="t" style="left:299.5px;top:980.0px;font-size:11px;line-height:13.2px;color:#222;transform:scaleX(0.999);transform-origin:0 50%;">63,18</div>
<div class="t" style="left:656.0px;top:980.0px;font-size:11px;line-height:13.2px;color:#222;transform:scaleX(0.999);transform-origin:0 50%;">62,54</div>
<div class="t" style="left:1012.5px;top:980.0px;font-size:11px;line-height:13.2px;color:#222;transform:scaleX(0.999);transform-origin:0 50%;">64,39</div>
<div class="t" style="left:1371.75px;top:980.0px;font-size:11px;line-height:13.2px;color:#222;transform:scaleX(1.028);transform-origin:0 50%;">1,85</div>
<div class="t" style="left:1728.75px;top:980.0px;font-size:11px;line-height:13.2px;color:#222;transform:scaleX(1.028);transform-origin:0 50%;">0,34</div>
<div class="t" style="left:119.5px;top:1000.0px;font-size:11px;line-height:13.2px;color:#222;transform:scaleX(0.853);transform-origin:0 50%;">R2</div>
<div class="t" style="left:299.5px;top:1000.0px;font-size:11px;line-height:13.2px;color:#222;transform:scaleX(0.999);transform-origin:0 50%;">55,30</div>
<div class="t" style="left:656.0px;top:1000.0px;font-size:11px;line-height:13.2px;color:#222;transform:scaleX(0.999);transform-origin:0 50%;">48,42</div>
<div class="t" style="left:1012.5px;top:1000.0px;font-size:11px;line-height:13.2px;color:#222;transform:scaleX(0.999);transform-origin:0 50%;">59,38</div>
<div class="t" style="left:1369.0px;top:1000.0px;font-size:11px;line-height:13.2px;color:#222;transform:scaleX(0.999);transform-origin:0 50%;">10,96</div>
<div class="t" style="left:1728.75px;top:1000.0px;font-size:11px;line-height:13.2px;color:#222;transform:scaleX(1.028);transform-origin:0 50%;">2,15</div>
<div class="t" style="left:119.5px;top:1020.1px;font-size:11px;line-height:13.2px;color:#222;transform:scaleX(0.853);transform-origin:0 50%;">R3</div>
<div class="t" style="left:299.5px;top:1020.1px;font-size:11px;line-height:13.2px;color:#222;transform:scaleX(0.999);transform-origin:0 50%;">29,71</div>
<div class="t" style="left:656.0px;top:1020.1px;font-size:11px;line-height:13.2px;color:#222;transform:scaleX(0.999);transform-origin:0 50%;">28,66</div>
<div class="t" style="left:1012.5px;top:1020.1px;font-size:11px;line-height:13.2px;color:#222;transform:scaleX(0.999);transform-origin:0 50%;">30,71</div>
<div class="t" style="left:1371.75px;top:1020.1px;font-size:11px;line-height:13.2px;color:#222;transform:scaleX(1.028);transform-origin:0 50%;">2,04</div>
<div class="t" style="left:1728.75px;top:1020.1px;font-size:11px;line-height:13.2px;color:#222;transform:scaleX(1.028);transform-origin:0 50%;">0,44</div>
<div class="t" style="left:119.5px;top:1040.2px;font-size:11px;line-height:13.2px;color:#222;transform:scaleX(0.858);transform-origin:0 50%;">L1</div>
<div class="t" style="left:299.5px;top:1040.2px;font-size:11px;line-height:13.2px;color:#222;transform:scaleX(0.999);transform-origin:0 50%;">52,71</div>
<div class="t" style="left:656.0px;top:1040.2px;font-size:11px;line-height:13.2px;color:#222;transform:scaleX(0.999);transform-origin:0 50%;">33,83</div>
<div class="t" style="left:1012.5px;top:1040.2px;font-size:11px;line-height:13.2px;color:#222;transform:scaleX(0.999);transform-origin:0 50%;">63,65</div>
<div class="t" style="left:1369.0px;top:1040.2px;font-size:11px;line-height:13.2px;color:#222;transform:scaleX(0.999);transform-origin:0 50%;">29,82</div>
<div class="t" style="left:1728.75px;top:1040.2px;font-size:11px;line-height:13.2px;color:#222;transform:scaleX(1.028);transform-origin:0 50%;">9,09</div>
<div class="b" style="left:114px;top:1056px;width:1806px;height:22px;background:#e7e7e7;"></div>
<div class="b" style="left:116px;top:1056px;width:1804px;height:1px;background:#f3f3f3;"></div>
<div class="b" style="left:245.5px;top:1058px;width:1px;height:19px;background:#d2d2d2;"></div>
<div class="b" style="left:246.5px;top:1058px;width:1px;height:19px;background:#f6f6f6;"></div>
<div class="b" style="left:310.5px;top:1058px;width:1px;height:19px;background:#d2d2d2;"></div>
<div class="b" style="left:311.5px;top:1058px;width:1px;height:19px;background:#f6f6f6;"></div>
<div class="b" style="left:365.5px;top:1058px;width:1px;height:19px;background:#d2d2d2;"></div>
<div class="b" style="left:366.5px;top:1058px;width:1px;height:19px;background:#f6f6f6;"></div>
<div class="b" style="left:420.5px;top:1058px;width:1px;height:19px;background:#d2d2d2;"></div>
<div class="b" style="left:421.5px;top:1058px;width:1px;height:19px;background:#f6f6f6;"></div>
<div class="t" style="left:116.5px;top:1064.3px;font-size:10.5px;line-height:12.6px;color:#333;transform:scaleX(0.962);transform-origin:0 50%;">(763/1): 24,41 &deg;C</div>
<div class="t" style="left:260.5px;top:1064.3px;font-size:10.5px;line-height:12.6px;color:#333;transform:scaleX(0.947);transform-origin:0 50%;">135,2 %</div>
<div class="t" style="left:330px;top:1064.3px;font-size:10.5px;line-height:12.6px;color:#333;transform:scaleX(0.905);transform-origin:0 50%;">1,00</div>
<div class="b" style="left:0px;top:1078px;width:1920px;height:2px;background:#3a3a3a;"></div>
<div class="b" style="left:666px;top:99.5px;width:281.5px;height:191px;background:#ecebf0;box-shadow:2px 2px 2px rgba(40,40,50,.55);border:1px solid #d8d7de;"></div>
<div class="b" style="left:667px;top:100.5px;width:23.5px;height:189px;background:linear-gradient(to right,#e6e4ee,#cfcde0 45%,#aaa8c6);"></div>
<div class="t" style="left:695.5px;top:103.7px;font-size:11.6px;line-height:13.9px;color:#1c1c1c;transform:scaleX(1.027);transform-origin:0 50%;"><span style="text-decoration:underline">T</span>hermogram (*.bmp, *.jpg)</div>
<div class="t" style="left:695.5px;top:124.5px;font-size:11.6px;line-height:13.9px;color:#1c1c1c;transform:scaleX(1.008);transform-origin:0 50%;"><span style="text-decoration:underline">S</span>creen (*.bmp, *.jpg)</div>
<div class="t" style="left:695.5px;top:145.2px;font-size:11.6px;line-height:13.9px;color:#b3b2bb;transform:scaleX(1.02);transform-origin:0 50%;">S<span style="text-decoration:underline">e</span>lection (*.bmp, *.jpg)</div>
<div class="t" style="left:695.5px;top:165.9px;font-size:11.6px;line-height:13.9px;color:#1c1c1c;transform:scaleX(1.01);transform-origin:0 50%;"><span style="text-decoration:underline">V</span>IS image (*.bmp, *.jpg, etc.)</div>
<div class="b" style="left:667px;top:184.5px;width:279px;height:20.5px;background:#f3e5b2;border:1px solid #b9a684;border-radius:2px;"></div>
<div class="b" style="left:667.5px;top:185px;width:21.5px;height:19.5px;background:#e8854c;border:1px solid #c96a38;"></div>
<div class="b" style="left:677px;top:192.8px;width:4px;height:4px;background:#111;border-radius:2px;"></div>
<div class="t" style="left:695.5px;top:187.5px;font-size:11.6px;line-height:13.9px;color:#1c1c1c;transform:scaleX(0.9);transform-origin:0 50%;"><span style="text-decoration:underline">I</span>RB ASCII</div>
<div class="t" style="left:695.5px;top:208.5px;font-size:11.6px;line-height:13.9px;color:#b3b2bb;transform:scaleX(0.983);transform-origin:0 50%;">I<span style="text-decoration:underline">R</span>B ASCII selection</div>
<div class="b" style="left:692.5px;top:225.5px;width:251.5px;height:1px;background:#a9a8b2;"></div>
<div class="b" style="left:692.5px;top:226.5px;width:251.5px;height:1px;background:#f8f8fb;"></div>
<div class="t" style="left:695.5px;top:230.7px;font-size:11.6px;line-height:13.9px;color:#1c1c1c;transform:scaleX(1.01);transform-origin:0 50%;"><span style="text-decoration:underline">M</span>easure definitions ASCII (measure values)</div>
<div class="t" style="left:695.5px;top:251.4px;font-size:11.6px;line-height:13.9px;color:#1c1c1c;transform:scaleX(1.02);transform-origin:0 50%;">Me<span style="text-decoration:underline">a</span>sure definitions ASCII (pixel data)</div>
<div class="b" style="left:692.5px;top:268.5px;width:251.5px;height:1px;background:#a9a8b2;"></div>
<div class="b" style="left:692.5px;top:269.5px;width:251.5px;height:1px;background:#f8f8fb;"></div>
<div class="t" style="left:695.5px;top:273.7px;font-size:11.6px;line-height:13.9px;color:#1c1c1c;transform:scaleX(0.988);transform-origin:0 50%;"><span style="text-decoration:underline">P</span>arameter</div>
<svg style="left:739px;top:190px" width="18.500" height="30" viewBox="0 0 16 26"><path d="M1 1V19.500L5.300 15.500L8.600 23.500L11.600 22.200L8.300 14.500H14z" fill="#fff" stroke="#111" stroke-width="1.100" stroke-linejoin="round"/></svg>
</body></html>
